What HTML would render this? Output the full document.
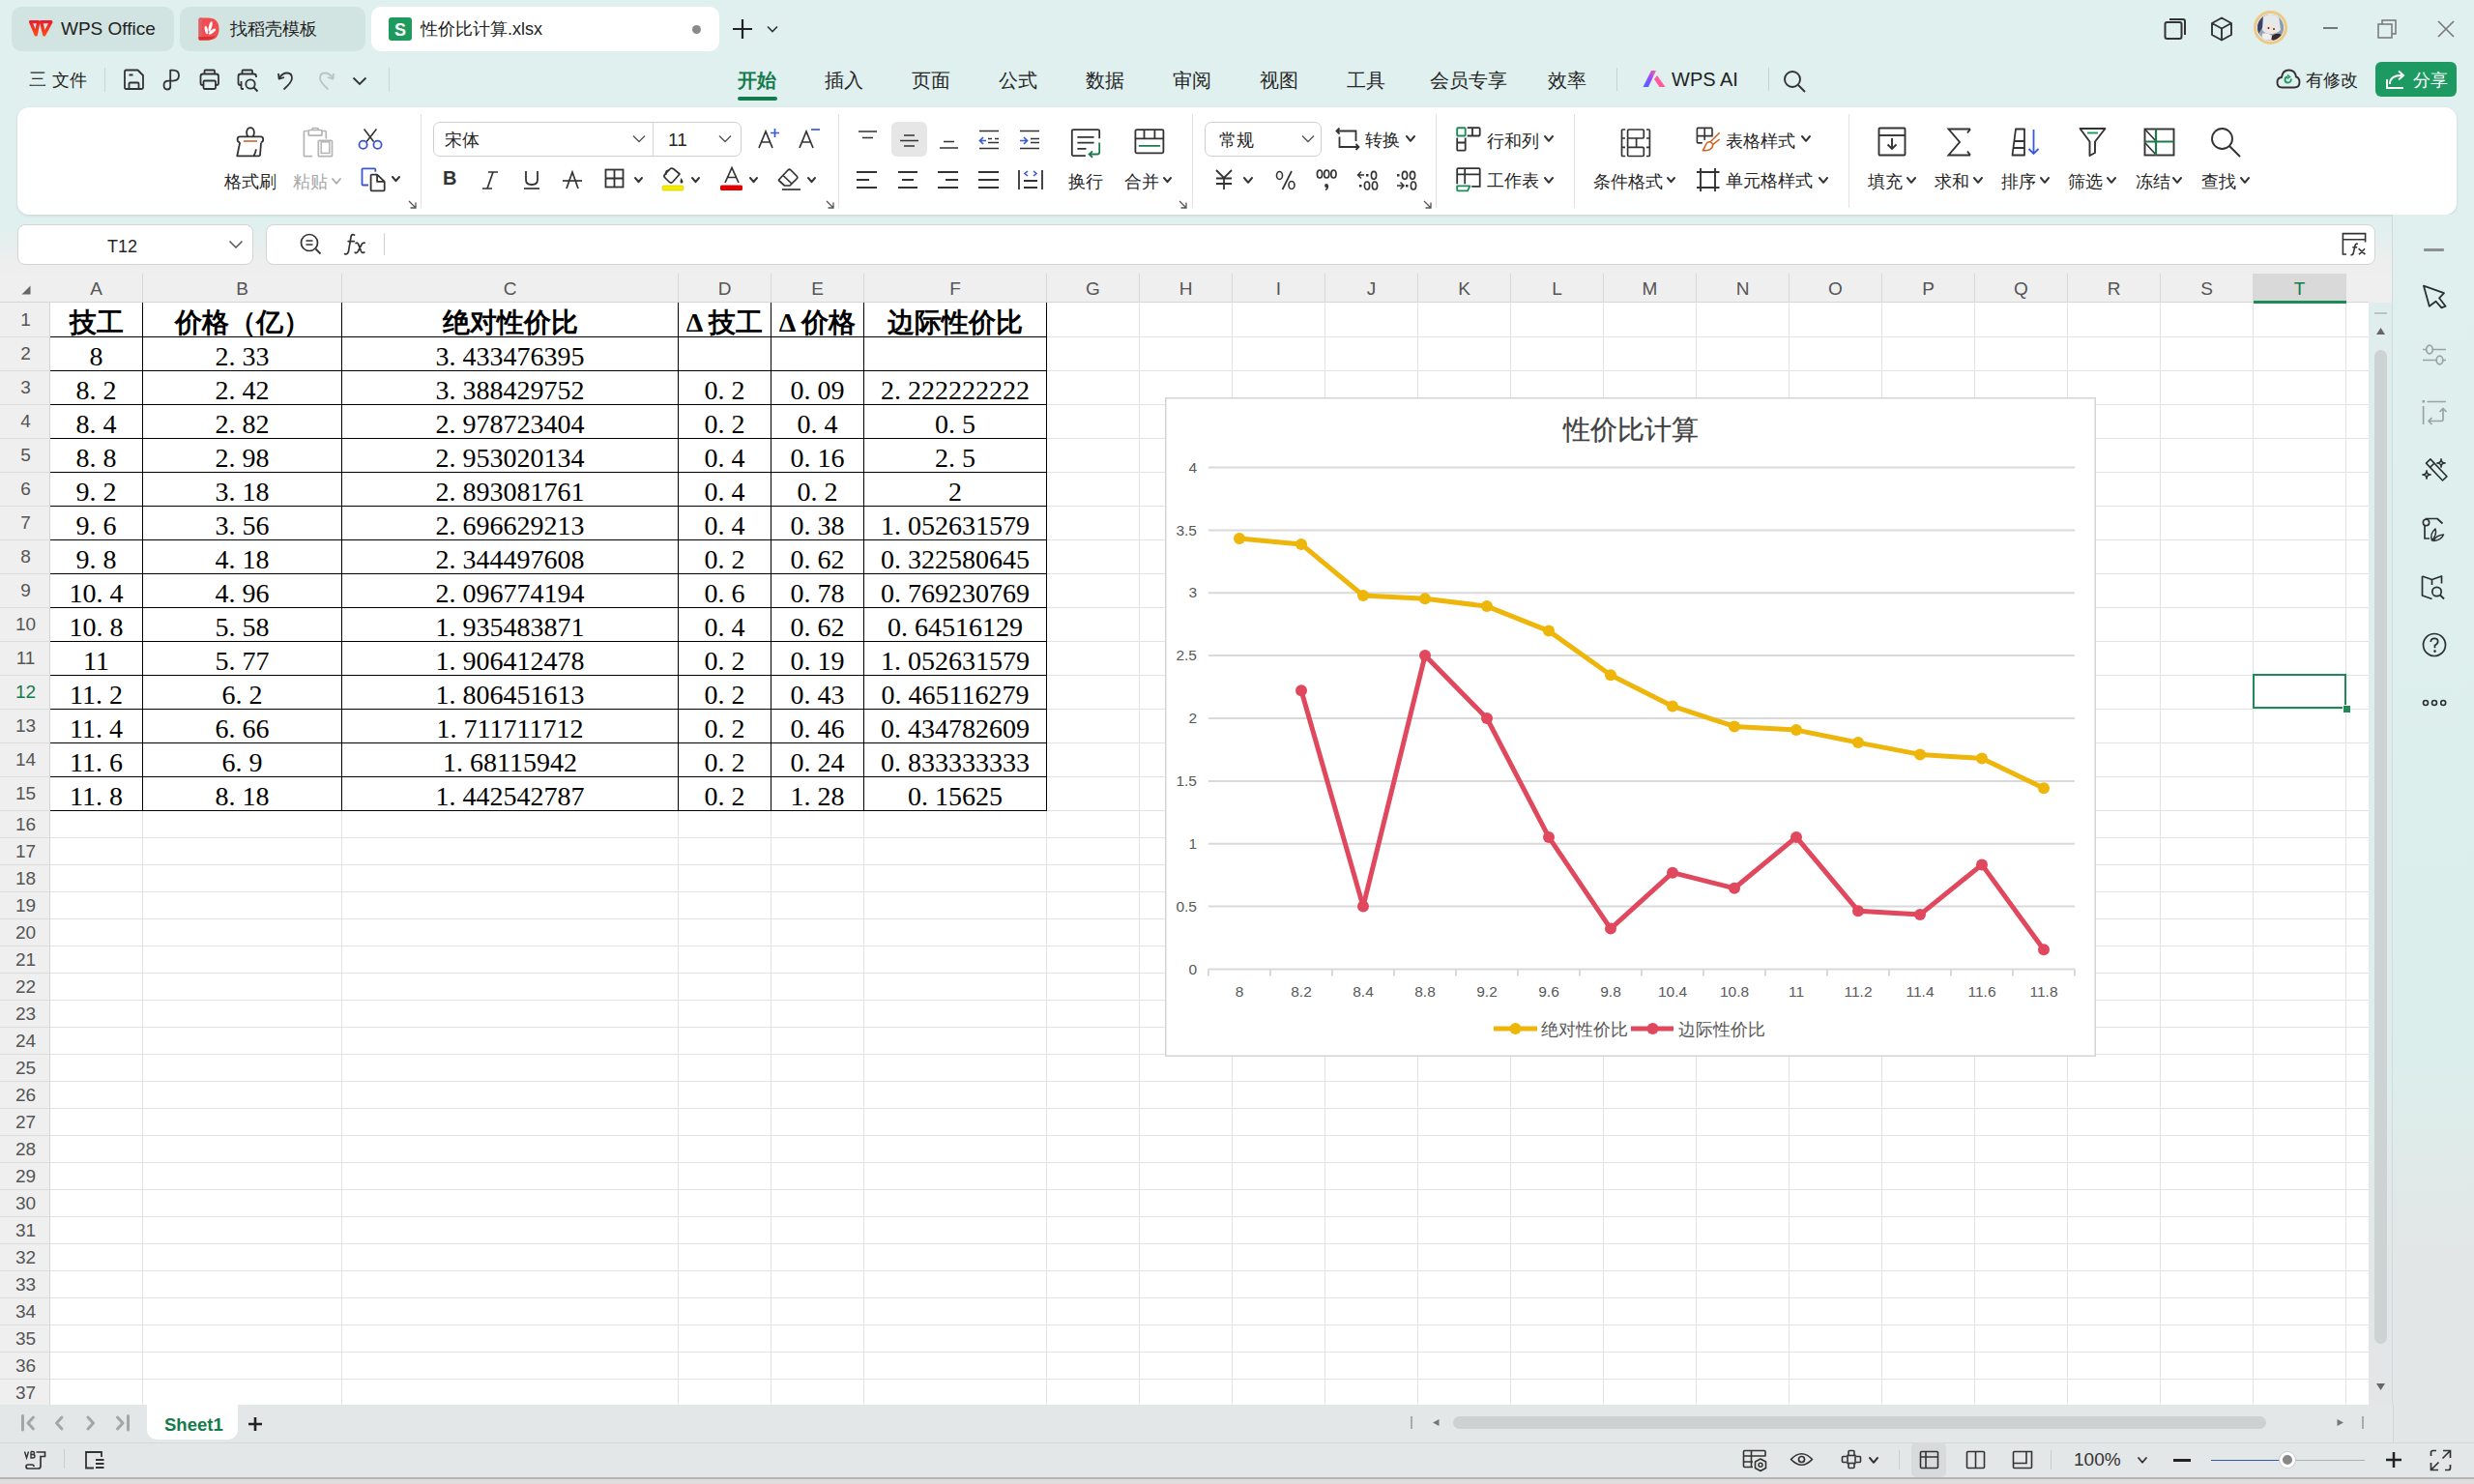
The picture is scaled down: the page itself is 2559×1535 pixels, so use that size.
<!DOCTYPE html><html><head><meta charset="utf-8"><title>WPS</title><style>
html,body{margin:0;padding:0;}
body{width:2559px;height:1535px;overflow:hidden;position:relative;font-family:'Liberation Sans',sans-serif;}
.t{position:absolute;white-space:nowrap;}
.r{position:absolute;}
.s{position:absolute;overflow:visible;}
.dt{display:inline-block;width:14px;text-align:left;}
</style></head><body><div class="r" style="left:0px;top:0px;width:2559px;height:1535px;background:#dff0ee;"></div>
<div class="r" style="left:0px;top:222px;width:2475px;height:62px;background:linear-gradient(#dff0ee 0px,#dff0ee 12px,#eeeeee 50px);"></div>
<div class="r" style="left:12px;top:7px;width:168px;height:46px;background:#d1e4e1;border-radius:10px"></div>
<div class="r" style="left:186px;top:7px;width:192px;height:46px;background:#d1e4e1;border-radius:10px"></div>
<div class="r" style="left:384px;top:7px;width:360px;height:46px;background:#ffffff;border-radius:10px"></div>
<svg class="s" style="left:28px;top:19px;" width="28" height="20" viewBox="0 0 28 20" fill="none"><defs><linearGradient id="wg" x1="0" y1="0" x2="0" y2="1"><stop offset="0" stop-color="#e8202e"/><stop offset="1" stop-color="#ff4a14"/></linearGradient></defs><path d="M3.6 3.6 H11.8 L9.2 16.8 Z M14.6 3.6 H24.8 L17.8 16.8 Z" stroke="url(#wg)" stroke-width="3.4" stroke-linejoin="round"/></svg>
<div class="t" style="left:63px;top:20px;font-size:19px;line-height:20px;color:#222;font-weight:normal;font-family:'Liberation Sans', sans-serif;">WPS Office</div>
<svg class="s" style="left:205px;top:18px;" width="23" height="25" viewBox="0 0 23 25" fill="none"><path d="M2 0.5 H10 Q21.5 0.5 21.5 12 Q21.5 23.5 10 23.5 H2 Q0.5 23.5 0.5 22 V2 Q0.5 0.5 2 0.5 Z" fill="#f14c52"/><path d="M0.5 2 Q0.5 0.5 2 0.5 H4 V23.5 H2 Q0.5 23.5 0.5 22 Z" fill="#e0606a"/><path d="M0.5 20 H12 Q16 20 18 18.5 Q15 23.5 10 23.5 H2 Q0.5 23.5 0.5 22 Z" fill="#d9302f"/><ellipse cx="8.4" cy="13" rx="1.5" ry="4.4" transform="rotate(-12 8.4 13)" fill="#fff"/><ellipse cx="12.6" cy="9.4" rx="1.6" ry="5.2" transform="rotate(14 12.6 9.4)" fill="#fff"/><ellipse cx="14.5" cy="14.6" rx="1.6" ry="4.5" transform="rotate(52 14.5 14.6)" fill="#fff"/></svg>
<div class="t" style="left:238px;top:21px;font-size:18px;line-height:18px;color:#222;font-weight:normal;font-family:'Liberation Sans', sans-serif;">找稻壳模板</div>
<svg class="s" style="left:402px;top:18px;" width="24" height="24" viewBox="0 0 24 24" fill="none"><rect x="0" y="0" width="24" height="24" rx="3" fill="#1e9a5d"/><text x="12" y="18.5" font-family="Liberation Sans" font-size="18" font-weight="bold" fill="#fff" text-anchor="middle">S</text></svg>
<div class="t" style="left:435px;top:21px;font-size:18px;line-height:18px;color:#222;font-weight:normal;font-family:'Liberation Sans', sans-serif;">性价比计算.xlsx</div>
<div class="r" style="left:716px;top:26px;width:9px;height:9px;border-radius:50%;background:#8a8a8a"></div>
<svg class="s" style="left:757px;top:19px;" width="22" height="22" viewBox="0 0 22 22" fill="none"><path d="M11 1 V21 M1 11 H21" stroke="#222" stroke-width="2.2"/></svg>
<svg class="s" style="left:793px;top:26px;" width="12" height="8" viewBox="0 0 12 8" fill="none"><path d="M1 1.5 L6 6.5 L11 1.5" stroke="#333" stroke-width="1.6"/></svg>
<svg class="s" style="left:2238px;top:18px;" width="24" height="24" viewBox="0 0 24 24" fill="none"><rect x="1.5" y="5" width="17" height="17" rx="2" stroke="#333" stroke-width="2"/><path d="M6 2 H20 Q22 2 22 4 V18" stroke="#333" stroke-width="2"/></svg>
<svg class="s" style="left:2286px;top:17px;" width="24" height="26" viewBox="0 0 24 26" fill="none"><path d="M12 1.5 L22 7 V19 L12 24.5 L2 19 V7 Z M2 7 L12 12.5 L22 7 M12 12.5 V24.5" stroke="#333" stroke-width="1.9" stroke-linejoin="round"/></svg>
<svg class="s" style="left:2331px;top:11px;" width="35" height="35" viewBox="0 0 35 35" fill="none"><defs><clipPath id="av"><circle cx="17.5" cy="17.5" r="13.5"/></clipPath></defs><circle cx="17.5" cy="17.5" r="16" stroke="#f0c886" stroke-width="3"/><g clip-path="url(#av)"><rect x="0" y="0" width="35" height="35" fill="#9aa3b8"/><path d="M2 4 L14 4 L10 16 L4 26 L2 26 Z" fill="#3c4266"/><path d="M24 6 L34 6 L34 26 L27 28 Z" fill="#8f9cae"/><path d="M10 4 Q18 2 26 6 L28 20 Q24 24 18 24 Q12 24 9 20 Z" fill="#e6e8ea"/><ellipse cx="18" cy="19" rx="5.5" ry="5" fill="#f2e4d8"/><circle cx="15.5" cy="18" r="1" fill="#4a3030"/><circle cx="21" cy="19" r="1" fill="#4a3030"/><path d="M9 24 Q14 22 19 26 L18 34 L8 34 Z" fill="#efeff0"/><path d="M19 26 Q24 22 29 25 L28 34 L18 34 Z" fill="#3a2a2a"/><path d="M13 30 L20 30 L19 34 L12 34 Z" fill="#e8b8b8"/></g></svg>
<div class="r" style="left:2403px;top:28px;width:15px;height:1.6px;background:#777;"></div>
<svg class="s" style="left:2459px;top:20px;" width="21" height="20" viewBox="0 0 21 20" fill="none"><rect x="1" y="5" width="14" height="14" stroke="#777" stroke-width="1.5"/><path d="M5 5 V1 H19 V15 H15" stroke="#777" stroke-width="1.5"/></svg>
<svg class="s" style="left:2521px;top:21px;" width="18" height="18" viewBox="0 0 18 18" fill="none"><path d="M1 1 L17 17 M17 1 L1 17" stroke="#777" stroke-width="1.6"/></svg>
<div class="t" style="left:30px;top:73px;font-size:18px;line-height:18px;color:#333;font-weight:normal;font-family:'Liberation Sans', sans-serif;">三</div>
<div class="t" style="left:54px;top:74px;font-size:18px;line-height:18px;color:#222;font-weight:normal;font-family:'Liberation Sans', sans-serif;">文件</div>
<div class="r" style="left:108px;top:70px;width:1px;height:25px;background:#c9d8d6;"></div>
<svg class="s" style="left:127px;top:71px;" width="24" height="23" viewBox="0 0 24 23" fill="none"><path d="M2 3 Q2 1.5 3.5 1.5 H15.5 L21 7 V19.5 Q21 21 19.5 21 H3.5 Q2 21 2 19.5 Z" stroke="#333" stroke-width="1.8" stroke-linejoin="round"/><path d="M6.5 21 V15.5 Q6.5 14.5 7.5 14.5 H15.5 Q16.5 14.5 16.5 15.5 V21 M6.5 6.5 H10.5" stroke="#333" stroke-width="1.8"/></svg>
<svg class="s" style="left:168px;top:71px;" width="20" height="24" viewBox="0 0 20 24" fill="none"><path d="M8.2 20 V1.6 H11 Q17 1.6 17 7.1 Q17 12.6 11 12.6 H6 Q1.5 12.6 1.5 17 Q1.5 21.5 5 21.5 Q8.2 21.5 8.2 18.5" stroke="#333" stroke-width="1.8" stroke-linejoin="round"/></svg>
<svg class="s" style="left:206px;top:71px;" width="22" height="23" viewBox="0 0 22 23" fill="none"><path d="M5.5 5.5 V2.5 Q5.5 1.5 6.5 1.5 H15 Q16 1.5 16 2.5 V5.5" stroke="#333" stroke-width="1.8"/><path d="M4.5 17 H3.5 Q1.5 17 1.5 15 V8 Q1.5 5.5 4 5.5 H17.5 Q20 5.5 20 8 V15 Q20 17 18 17 H17" stroke="#333" stroke-width="1.8"/><rect x="4.5" y="12.5" width="12.5" height="8.5" rx="1.2" stroke="#333" stroke-width="1.8"/></svg>
<svg class="s" style="left:245px;top:71px;" width="24" height="25" viewBox="0 0 24 25" fill="none"><path d="M5.5 5.5 V2.5 Q5.5 1.5 6.5 1.5 H15 Q16 1.5 16 2.5 V5.5" stroke="#333" stroke-width="1.8"/><path d="M4.5 17 H3.5 Q1.5 17 1.5 15 V8 Q1.5 5.5 4 5.5 H17.5 Q20 5.5 20 8 V9" stroke="#333" stroke-width="1.8"/><path d="M4.5 13 V20 Q4.5 21 5.5 21 H7" stroke="#333" stroke-width="1.8"/><circle cx="14" cy="16" r="4.7" stroke="#333" stroke-width="1.8"/><path d="M17.5 19.5 L21.5 23.5" stroke="#333" stroke-width="1.9"/></svg>
<svg class="s" style="left:286px;top:72px;" width="20" height="22" viewBox="0 0 20 22" fill="none"><path d="M2 4 L2.6 9.6 L8 8" stroke="#333" stroke-width="1.8" stroke-linejoin="round"/><path d="M2.8 9 Q6 3.5 11 3.5 Q16 3.5 16 9 Q16 13 7.5 20.5" stroke="#333" stroke-width="1.8"/></svg>
<svg class="s" style="left:327px;top:72px;" width="20" height="22" viewBox="0 0 20 22" fill="none"><path d="M18 4 L17.4 9.6 L12 8" stroke="#b9c4c2" stroke-width="1.8" stroke-linejoin="round"/><path d="M17.2 9 Q14 3.5 9 3.5 Q4 3.5 4 9 Q4 13 12.5 20.5" stroke="#b9c4c2" stroke-width="1.8"/></svg>
<svg class="s" style="left:364px;top:79px;" width="16" height="10" viewBox="0 0 16 10" fill="none"><path d="M1.5 1.5 L8 8 L14.5 1.5" stroke="#333" stroke-width="1.8"/></svg>
<div class="r" style="left:402px;top:70px;width:1px;height:25px;background:#c9d8d6;"></div>
<div class="t" style="left:763px;top:73px;font-size:20px;line-height:20px;color:#147a4c;font-weight:bold;font-family:'Liberation Sans', sans-serif;">开始</div>
<div class="r" style="left:763px;top:100px;width:41px;height:3.5px;background:#147a4c;border-radius:2px"></div>
<div class="t" style="left:853px;top:73px;font-size:20px;line-height:20px;color:#262626;font-weight:normal;font-family:'Liberation Sans', sans-serif;">插入</div>
<div class="t" style="left:943px;top:73px;font-size:20px;line-height:20px;color:#262626;font-weight:normal;font-family:'Liberation Sans', sans-serif;">页面</div>
<div class="t" style="left:1033px;top:73px;font-size:20px;line-height:20px;color:#262626;font-weight:normal;font-family:'Liberation Sans', sans-serif;">公式</div>
<div class="t" style="left:1123px;top:73px;font-size:20px;line-height:20px;color:#262626;font-weight:normal;font-family:'Liberation Sans', sans-serif;">数据</div>
<div class="t" style="left:1213px;top:73px;font-size:20px;line-height:20px;color:#262626;font-weight:normal;font-family:'Liberation Sans', sans-serif;">审阅</div>
<div class="t" style="left:1303px;top:73px;font-size:20px;line-height:20px;color:#262626;font-weight:normal;font-family:'Liberation Sans', sans-serif;">视图</div>
<div class="t" style="left:1393px;top:73px;font-size:20px;line-height:20px;color:#262626;font-weight:normal;font-family:'Liberation Sans', sans-serif;">工具</div>
<div class="t" style="left:1479px;top:73px;font-size:20px;line-height:20px;color:#262626;font-weight:normal;font-family:'Liberation Sans', sans-serif;">会员专享</div>
<div class="t" style="left:1601px;top:73px;font-size:20px;line-height:20px;color:#262626;font-weight:normal;font-family:'Liberation Sans', sans-serif;">效率</div>
<div class="r" style="left:1672px;top:70px;width:1px;height:24px;background:#c5d3d1;"></div>
<svg class="s" style="left:1699px;top:72px;" width="24" height="19" viewBox="0 0 24 19" fill="none"><defs><linearGradient id="ai" x1="0" y1="1" x2="1" y2="0"><stop offset="0" stop-color="#3f6cff"/><stop offset="0.5" stop-color="#8b4dff"/><stop offset="1" stop-color="#ff5fa0"/></linearGradient></defs><path d="M0.5 18 L9 1 H14 L6 18 Z" fill="url(#ai)"/><path d="M12 10 L15 6 L23.5 18 H17.5 Z" fill="#ff5b9c"/></svg>
<div class="t" style="left:1729px;top:72px;font-size:20px;line-height:20px;color:#222;font-weight:normal;font-family:'Liberation Sans', sans-serif;">WPS AI</div>
<div class="r" style="left:1829px;top:70px;width:1px;height:24px;background:#c5d3d1;"></div>
<svg class="s" style="left:1844px;top:72px;" width="25" height="24" viewBox="0 0 25 24" fill="none"><circle cx="10" cy="10" r="8" stroke="#333" stroke-width="1.9"/><path d="M16 16 L23 23" stroke="#333" stroke-width="2"/></svg>
<svg class="s" style="left:2354px;top:70px;" width="26" height="22" viewBox="0 0 26 22" fill="none"><path d="M6.5 20.5 Q1.5 20.5 1.5 15 Q1.5 10.5 6 10 Q7 2.5 13.5 2.5 Q20 2.5 21 9.5 Q24.5 10.5 24.5 15 Q24.5 20.5 19 20.5 Z" stroke="#333" stroke-width="1.9" stroke-linejoin="round"/><path d="M16 11.5 Q15.5 15.5 12.5 15.5 Q9.5 15.5 9.5 12.5 Q9.5 9.5 12.5 9.5" stroke="#1e9a5d" stroke-width="1.9"/><path d="M12 7.5 L14.5 9.5 L12 11.5" stroke="#1e9a5d" stroke-width="1.6"/></svg>
<div class="t" style="left:2385px;top:74px;font-size:18px;line-height:18px;color:#262626;font-weight:normal;font-family:'Liberation Sans', sans-serif;">有修改</div>
<div class="r" style="left:2457px;top:64px;width:84px;height:36px;background:#1d9a61;border-radius:6px"></div>
<svg class="s" style="left:2467px;top:71px;" width="22" height="22" viewBox="0 0 22 22" fill="none"><path d="M2 11 V20 H19" stroke="#fff" stroke-width="1.9"/><path d="M5 16 Q5 7 17 7" stroke="#fff" stroke-width="1.9"/><path d="M14 2.5 L19 7 L14 11.5" stroke="#fff" stroke-width="1.9"/></svg>
<div class="t" style="left:2496px;top:74px;font-size:18px;line-height:18px;color:#ffffff;font-weight:normal;font-family:'Liberation Sans', sans-serif;">分享</div>
<div class="r" style="left:18px;top:111px;width:2523px;height:111px;background:#ffffff;border-radius:12px;box-shadow:0 1px 3px rgba(0,0,0,0.12)"></div>
<svg class="s" style="left:243px;top:131px;" width="32" height="32" viewBox="0 0 32 32" fill="none"><path d="M13.6 10.3 Q11.8 8.5 12.2 5.2 Q12.8 1.2 16 1.2 Q19.2 1.2 19.8 5.2 Q20.2 8.5 18.4 10.3 M5 16.1 Q2.6 16.1 2.6 13.2 Q2.6 10.3 5 10.3 H26.8 Q29.2 10.3 29.2 13.2 Q29.2 16.1 26.8 16.1 M5.2 16.1 L2.3 30.3 H24.8 Q25.6 30.3 26 29.4 L27 16.8 M21.9 23.4 Q21.5 27 19.4 30.3" stroke="#333" stroke-width="1.8" stroke-linejoin="round"/><path d="M8.8 15 H23" stroke="#c8622b" stroke-width="1.6"/></svg>
<div class="t" style="left:232px;top:179px;font-size:18px;line-height:18px;color:#262626;font-weight:normal;font-family:'Liberation Sans', sans-serif;">格式刷</div>
<svg class="s" style="left:313px;top:131px;" width="32" height="32" viewBox="0 0 32 32" fill="none"><path d="M10.2 30.7 H2.4 Q1.4 30.7 1.4 29.7 V5.5 Q1.4 4.5 2.4 4.5 H5.5 M20 4.5 H23.3 Q24.3 4.5 24.3 5.5 V12.5 M10.2 3.5 V2 Q10.2 1.5 10.7 1.5 H15.5 Q16 1.5 16 2 V3.5" stroke="#b5b5b5" stroke-width="1.7"/><rect x="6.2" y="3.5" width="13.8" height="5.7" rx="1" stroke="#b5b5b5" stroke-width="1.7"/><rect x="16.3" y="14.3" width="14.2" height="16.4" rx="1" stroke="#b5b5b5" stroke-width="1.7"/><rect x="19.2" y="15.8" width="8.6" height="11.6" stroke="#b5b5b5" stroke-width="1.5"/></svg>
<div class="t" style="left:303px;top:179px;font-size:18px;line-height:18px;color:#a8a8a8;font-weight:normal;font-family:'Liberation Sans', sans-serif;">粘贴</div>
<svg class="s" style="left:343px;top:184px;" width="10" height="6.8" viewBox="0 0 10 6.8" fill="none"><path d="M1 1 L5.0 5.8 L9 1" stroke="#aaa" stroke-width="1.8" stroke-linecap="round" stroke-linejoin="round"/></svg>
<svg class="s" style="left:370px;top:133px;" width="26" height="22" viewBox="0 0 26 22" fill="none"><path d="M6.6 0.6 L16.5 13.4 M19.4 0.6 L9.2 13.4" stroke="#333" stroke-width="1.6"/><circle cx="5.6" cy="16.7" r="4.1" stroke="#3a55d0" stroke-width="1.8"/><circle cx="20.5" cy="16.7" r="4.1" stroke="#3a55d0" stroke-width="1.8"/></svg>
<svg class="s" style="left:373px;top:173px;" width="26" height="26" viewBox="0 0 26 26" fill="none"><path d="M8 18.5 H2.5 Q1.5 18.5 1.5 17.5 V2.4 Q1.5 1.4 2.5 1.4 H14.3 Q15.3 1.4 15.3 2.4 V4.7" stroke="#3a55d0" stroke-width="1.8"/><path d="M10.6 23.3 V8.6 Q10.6 7.6 11.6 7.6 H17.1 L24.7 14.9 V23.3 Q24.7 24.3 23.7 24.3 H11.6 Q10.6 24.3 10.6 23.3 Z M17.1 7.6 V14.9 H24.7" stroke="#333" stroke-width="1.8" stroke-linejoin="round"/></svg>
<svg class="s" style="left:405px;top:182px;" width="9" height="6.2" viewBox="0 0 9 6.2" fill="none"><path d="M1 1 L4.5 5.2 L8 1" stroke="#333" stroke-width="2" stroke-linecap="round" stroke-linejoin="round"/></svg>
<svg class="s" style="left:422px;top:207px;" width="9" height="9" viewBox="0 0 9 9" fill="none"><path d="M1 1 L8 8 M8 2.5 V8 H2.5" stroke="#555" stroke-width="1.3"/></svg>
<div class="r" style="left:435px;top:118px;width:1px;height:97px;background:#e1e1e1;"></div>
<div class="r" style="left:448px;top:126px;width:317px;height:34px;border:1px solid #cfcfcf;border-radius:7px;background:#fff"></div>
<div class="r" style="left:675px;top:127px;width:1px;height:34px;background:#d6d6d6;"></div>
<div class="t" style="left:460px;top:136px;font-size:18px;line-height:18px;color:#262626;font-weight:normal;font-family:'Liberation Sans', sans-serif;">宋体</div>
<svg class="s" style="left:654px;top:139px;" width="14" height="9" viewBox="0 0 14 9" fill="none"><path d="M1 1.5 L7 7.5 L13 1.5" stroke="#555" stroke-width="1.4"/></svg>
<div class="t" style="left:691px;top:135px;font-size:19px;line-height:19px;color:#262626;font-weight:normal;font-family:'Liberation Sans', sans-serif;">11</div>
<svg class="s" style="left:743px;top:139px;" width="14" height="9" viewBox="0 0 14 9" fill="none"><path d="M1 1.5 L7 7.5 L13 1.5" stroke="#555" stroke-width="1.4"/></svg>
<svg class="s" style="left:784px;top:132px;" width="24" height="22" viewBox="0 0 24 22" fill="none"><path d="M1 21 L8 4 L15 21 M3.8 15 H12.2" stroke="#333" stroke-width="1.7"/><path d="M17.5 1 V10 M13 5.5 H22" stroke="#3a5bd9" stroke-width="1.7"/></svg>
<svg class="s" style="left:826px;top:132px;" width="24" height="22" viewBox="0 0 24 22" fill="none"><path d="M1 21 L8 4 L15 21 M3.8 15 H12.2" stroke="#333" stroke-width="1.7"/><path d="M13 2 H22" stroke="#3a5bd9" stroke-width="1.7"/></svg>
<div class="t" style="left:458px;top:174px;font-size:20px;line-height:20px;color:#333;font-weight:normal;font-family:'Liberation Sans', sans-serif;font-family:Liberation Sans"><b>B</b></div>
<svg class="s" style="left:498px;top:177px;" width="18" height="19" viewBox="0 0 18 19" fill="none"><path d="M7 1 H17 M1 18 H11 M12 1 L6 18" stroke="#333" stroke-width="1.7"/></svg>
<svg class="s" style="left:541px;top:176px;" width="18" height="20" viewBox="0 0 18 20" fill="none"><path d="M3 1 V10 Q3 15 9 15 Q15 15 15 10 V1" stroke="#333" stroke-width="1.8"/><path d="M1 19 H17" stroke="#333" stroke-width="1.7"/></svg>
<svg class="s" style="left:581px;top:176px;" width="22" height="20" viewBox="0 0 22 20" fill="none"><path d="M5 19 L11 2 L17 19" stroke="#333" stroke-width="1.7"/><path d="M1 11 H21" stroke="#333" stroke-width="1.7"/></svg>
<svg class="s" style="left:625px;top:174px;" width="22" height="22" viewBox="0 0 22 22" fill="none"><rect x="1.5" y="1.5" width="18" height="18" stroke="#333" stroke-width="1.8"/><path d="M10.5 1.5 V19.5 M1.5 10.5 H19.5" stroke="#333" stroke-width="1.8"/></svg>
<svg class="s" style="left:656px;top:183px;" width="9" height="6.2" viewBox="0 0 9 6.2" fill="none"><path d="M1 1 L4.5 5.2 L8 1" stroke="#333" stroke-width="2" stroke-linecap="round" stroke-linejoin="round"/></svg>
<svg class="s" style="left:684px;top:172px;" width="26" height="26" viewBox="0 0 26 26" fill="none"><path d="M8 4 Q10 1 13 3 L19 8 L12 16 Q10 18 8 16 L4 12 Q2 10 4 8 Z" stroke="#333" stroke-width="1.7" stroke-linejoin="round"/><path d="M8 4 Q4 4 5 9" stroke="#333" stroke-width="1.7"/><path d="M20.5 12 Q22.5 15 22.5 16 Q22.5 17.5 21 17.5 Q19.5 17.5 19.5 16 Q19.5 15 20.5 12Z" fill="#333"/><rect x="1" y="20" width="22" height="5" rx="1.5" fill="#f4ec00" stroke="#d9cf00" stroke-width="0.8"/></svg>
<svg class="s" style="left:715px;top:183px;" width="9" height="6.2" viewBox="0 0 9 6.2" fill="none"><path d="M1 1 L4.5 5.2 L8 1" stroke="#333" stroke-width="2" stroke-linecap="round" stroke-linejoin="round"/></svg>
<svg class="s" style="left:744px;top:172px;" width="26" height="26" viewBox="0 0 26 26" fill="none"><path d="M6 17 L13 1.5 L20 17 M8.5 11.5 H17.5" stroke="#333" stroke-width="1.7"/><rect x="1" y="19.5" width="23" height="5.5" rx="1.5" fill="#e00000"/></svg>
<svg class="s" style="left:775px;top:183px;" width="9" height="6.2" viewBox="0 0 9 6.2" fill="none"><path d="M1 1 L4.5 5.2 L8 1" stroke="#333" stroke-width="2" stroke-linecap="round" stroke-linejoin="round"/></svg>
<svg class="s" style="left:803px;top:173px;" width="28" height="24" viewBox="0 0 28 24" fill="none"><path d="M2.5 13 L12 3 Q13.5 1.5 15 3 L21 9 Q22.5 10.5 21 12 L14 19 H8.5 L2.5 13.5 Z" stroke="#333" stroke-width="1.7" stroke-linejoin="round"/><path d="M7 8.5 L16 17" stroke="#333" stroke-width="1.7"/><path d="M6 23 H25" stroke="#333" stroke-width="1.7"/></svg>
<svg class="s" style="left:835px;top:183px;" width="9" height="6.2" viewBox="0 0 9 6.2" fill="none"><path d="M1 1 L4.5 5.2 L8 1" stroke="#333" stroke-width="2" stroke-linecap="round" stroke-linejoin="round"/></svg>
<svg class="s" style="left:854px;top:207px;" width="9" height="9" viewBox="0 0 9 9" fill="none"><path d="M1 1 L8 8 M8 2.5 V8 H2.5" stroke="#555" stroke-width="1.3"/></svg>
<div class="r" style="left:867px;top:118px;width:1px;height:97px;background:#e1e1e1;"></div>
<svg class="s" style="left:888px;top:135px;" width="20" height="10" viewBox="0 0 20 10" fill="none"><path d="M0 1 H19 M4 7.5 H15" stroke="#333" stroke-width="1.6"/></svg>
<div class="r" style="left:922px;top:126px;width:37px;height:36px;background:#e6e6e6;border-radius:6px"></div>
<svg class="s" style="left:931px;top:139px;" width="20" height="14" viewBox="0 0 20 14" fill="none"><path d="M4 1 H15 M0 6.5 H19 M4 12 H15" stroke="#333" stroke-width="1.6"/></svg>
<svg class="s" style="left:972px;top:145px;" width="20" height="10" viewBox="0 0 20 10" fill="none"><path d="M4 1.5 H15 M0 8 H19" stroke="#333" stroke-width="1.6"/></svg>
<svg class="s" style="left:1012px;top:134px;" width="22" height="22" viewBox="0 0 22 22" fill="none"><path d="M1 1.5 H21 M10 9.5 H14 M17 9.5 H21 M10 13.5 H21 M1 19.5 H21" stroke="#333" stroke-width="1.7"/><path d="M8 11.5 H1.5 M5 8 L1.5 11.5 L5 15" stroke="#3a5bd9" stroke-width="1.7"/></svg>
<svg class="s" style="left:1054px;top:134px;" width="22" height="22" viewBox="0 0 22 22" fill="none"><path d="M1 1.5 H21 M12 9.5 H21 M12 13.5 H21 M1 19.5 H21" stroke="#333" stroke-width="1.7"/><path d="M1 11.5 H8.5 M5 8 L8.5 11.5 L5 15" stroke="#3a5bd9" stroke-width="1.7"/></svg>
<svg class="s" style="left:886px;top:177px;" width="22" height="19" viewBox="0 0 22 19" fill="none"><path d="M0 1 H21 M0 9 H13 M0 17 H21" stroke="#333" stroke-width="1.8"/></svg>
<svg class="s" style="left:928px;top:177px;" width="22" height="19" viewBox="0 0 22 19" fill="none"><path d="M1 1 H21 M5 9 H17 M1 17 H21" stroke="#333" stroke-width="1.8"/></svg>
<svg class="s" style="left:970px;top:177px;" width="22" height="19" viewBox="0 0 22 19" fill="none"><path d="M0 1 H21 M8 9 H21 M0 17 H21" stroke="#333" stroke-width="1.8"/></svg>
<svg class="s" style="left:1012px;top:177px;" width="22" height="19" viewBox="0 0 22 19" fill="none"><path d="M0 1 H21 M0 9 H21 M0 17 H21" stroke="#333" stroke-width="1.8"/></svg>
<svg class="s" style="left:1053px;top:175px;" width="26" height="22" viewBox="0 0 26 22" fill="none"><path d="M1 1 V21 M25 1 V21 M6 12 H20 M6 19 H20" stroke="#333" stroke-width="1.8"/><path d="M10 2 L7 4.5 L10 7 M16 2 L19 4.5 L16 7" stroke="#3a5bd9" stroke-width="1.6"/></svg>
<svg class="s" style="left:1107px;top:133px;" width="33" height="32" viewBox="0 0 33 32" fill="none"><path d="M15.8 28.1 H3.3 Q1.8 28.1 1.8 26.6 V2.6 Q1.8 1.1 3.3 1.1 H28.7 Q30.2 1.1 30.2 2.6 V10.2 M7.4 8.8 H24.6 M7.4 14.6 H24.6 M7.4 20.9 H16.5" stroke="#333" stroke-width="1.8"/><path d="M30.2 14.4 V24.5 Q30.2 26.5 28.2 26.5 H19.8 M23 23.3 L19.6 26.5 L23 29.9" stroke="#1e7a4d" stroke-width="1.8"/></svg>
<div class="t" style="left:1105px;top:179px;font-size:18px;line-height:18px;color:#262626;font-weight:normal;font-family:'Liberation Sans', sans-serif;">换行</div>
<svg class="s" style="left:1173px;top:133px;" width="32" height="27" viewBox="0 0 32 27" fill="none"><rect x="1.4" y="1.1" width="29" height="24.2" rx="1.5" stroke="#333" stroke-width="1.8"/><path d="M1.4 10.4 H30.4 M10.5 1.1 V10.4 M21.4 1.1 V10.4" stroke="#333" stroke-width="1.8"/><path d="M5.6 17.9 H26.3" stroke="#1e7a4d" stroke-width="1.9" stroke-linecap="round"/></svg>
<div class="t" style="left:1163px;top:179px;font-size:18px;line-height:18px;color:#262626;font-weight:normal;font-family:'Liberation Sans', sans-serif;">合并</div>
<svg class="s" style="left:1203px;top:183px;" width="9" height="6.2" viewBox="0 0 9 6.2" fill="none"><path d="M1 1 L4.5 5.2 L8 1" stroke="#333" stroke-width="2" stroke-linecap="round" stroke-linejoin="round"/></svg>
<svg class="s" style="left:1219px;top:207px;" width="9" height="9" viewBox="0 0 9 9" fill="none"><path d="M1 1 L8 8 M8 2.5 V8 H2.5" stroke="#555" stroke-width="1.3"/></svg>
<div class="r" style="left:1233px;top:118px;width:1px;height:97px;background:#e1e1e1;"></div>
<div class="r" style="left:1246px;top:126px;width:119px;height:34px;border:1px solid #cfcfcf;border-radius:7px;background:#fff"></div>
<div class="t" style="left:1261px;top:136px;font-size:18px;line-height:18px;color:#262626;font-weight:normal;font-family:'Liberation Sans', sans-serif;">常规</div>
<svg class="s" style="left:1346px;top:139px;" width="14" height="9" viewBox="0 0 14 9" fill="none"><path d="M1 1.5 L7 7.5 L13 1.5" stroke="#555" stroke-width="1.4"/></svg>
<svg class="s" style="left:1381px;top:131px;" width="26" height="26" viewBox="0 0 26 26" fill="none"><path d="M4.5 1.5 L1.5 4.5 L4.5 7.5 M1.5 4.5 H21.5 V15" stroke="#333" stroke-width="1.8"/><path d="M21.5 24 L24.5 21 L21.5 18 M24.5 21 H4.5 V10.5" stroke="#333" stroke-width="1.8"/></svg>
<div class="t" style="left:1412px;top:136px;font-size:18px;line-height:18px;color:#262626;font-weight:normal;font-family:'Liberation Sans', sans-serif;">转换</div>
<svg class="s" style="left:1454px;top:140px;" width="10" height="6.8" viewBox="0 0 10 6.8" fill="none"><path d="M1 1 L5.0 5.8 L9 1" stroke="#333" stroke-width="2" stroke-linecap="round" stroke-linejoin="round"/></svg>
<div class="t" style="left:1256px;top:175px;font-size:22px;line-height:22px;color:#333;font-weight:normal;font-family:'Liberation Sans', sans-serif;">¥</div>
<svg class="s" style="left:1256px;top:175px;background:#fff" width="20" height="22" viewBox="0 0 20 22" fill="none"><path d="M2 1 L10 9 L18 1 M2 9.5 H18 M2 15 H18 M10 9 V21" stroke="#333" stroke-width="1.8"/></svg>
<svg class="s" style="left:1286px;top:183px;" width="10" height="6.8" viewBox="0 0 10 6.8" fill="none"><path d="M1 1 L5.0 5.8 L9 1" stroke="#333" stroke-width="2" stroke-linecap="round" stroke-linejoin="round"/></svg>
<svg class="s" style="left:1319px;top:176px;" width="22" height="21" viewBox="0 0 22 21" fill="none"><path d="M17 1 L7.5 20" stroke="#333" stroke-width="1.7"/><ellipse cx="4.5" cy="5.5" rx="3" ry="4" stroke="#333" stroke-width="1.6"/><ellipse cx="17" cy="15.5" rx="3" ry="4" stroke="#333" stroke-width="1.6"/></svg>
<svg class="s" style="left:1360px;top:174px;" width="24" height="24" viewBox="0 0 24 24" fill="none"><ellipse cx="5" cy="6" rx="2.6" ry="4" stroke="#333" stroke-width="1.7"/><ellipse cx="12.2" cy="6" rx="2.6" ry="4" stroke="#333" stroke-width="1.7"/><ellipse cx="19.4" cy="6" rx="2.6" ry="4" stroke="#333" stroke-width="1.7"/><circle cx="12" cy="18" r="1.9" fill="#333"/><path d="M13.5 18 Q13.6 20.8 11.2 22.6" stroke="#333" stroke-width="1.6"/></svg>
<svg class="s" style="left:1403px;top:176px;" width="24" height="22" viewBox="0 0 24 22" fill="none"><path d="M5 1.5 L1.5 5 L5 8.5 M1.5 5 H8" stroke="#333" stroke-width="1.5"/><rect x="10" y="4" width="2.5" height="2.5" fill="#333"/><ellipse cx="18" cy="5.3" rx="2.6" ry="4" stroke="#333" stroke-width="1.7"/><rect x="3" y="15" width="2.5" height="2.5" fill="#333"/><ellipse cx="11" cy="16" rx="2.6" ry="4" stroke="#333" stroke-width="1.7"/><ellipse cx="19" cy="16" rx="2.6" ry="4" stroke="#333" stroke-width="1.7"/></svg>
<svg class="s" style="left:1444px;top:176px;" width="24" height="22" viewBox="0 0 24 22" fill="none"><rect x="1" y="4" width="2.5" height="2.5" fill="#333"/><ellipse cx="9" cy="5.3" rx="2.6" ry="4" stroke="#333" stroke-width="1.7"/><ellipse cx="17" cy="5.3" rx="2.6" ry="4" stroke="#333" stroke-width="1.7"/><path d="M1 16 H7.5 M4.5 12.5 L8 16 L4.5 19.5" stroke="#333" stroke-width="1.5"/><rect x="10" y="15" width="2.5" height="2.5" fill="#333"/><ellipse cx="18" cy="16" rx="2.6" ry="4" stroke="#333" stroke-width="1.7"/></svg>
<svg class="s" style="left:1472px;top:207px;" width="9" height="9" viewBox="0 0 9 9" fill="none"><path d="M1 1 L8 8 M8 2.5 V8 H2.5" stroke="#555" stroke-width="1.3"/></svg>
<div class="r" style="left:1485px;top:118px;width:1px;height:97px;background:#e1e1e1;"></div>
<svg class="s" style="left:1506px;top:131px;" width="27" height="27" viewBox="0 0 27 27" fill="none"><rect x="1.2" y="1.2" width="8.5" height="8.3" rx="1" stroke="#1e8a57" stroke-width="1.9"/><path d="M11.7 1.2 H23.7 Q24.7 1.2 24.7 2.2 V8.5 Q24.7 9.5 23.7 9.5 H11.7 M17 1.2 V9.5 M1.2 11.5 V23.7 Q1.2 24.7 2.2 24.7 H8.7 Q9.7 24.7 9.7 23.7 V11.5 M1.2 16.5 H9.7" stroke="#333" stroke-width="1.8"/></svg>
<div class="t" style="left:1538px;top:137px;font-size:18px;line-height:18px;color:#262626;font-weight:normal;font-family:'Liberation Sans', sans-serif;">行和列</div>
<svg class="s" style="left:1597px;top:140px;" width="10" height="6.8" viewBox="0 0 10 6.8" fill="none"><path d="M1 1 L5.0 5.8 L9 1" stroke="#333" stroke-width="2" stroke-linecap="round" stroke-linejoin="round"/></svg>
<svg class="s" style="left:1506px;top:173px;" width="27" height="27" viewBox="0 0 27 27" fill="none"><path d="M1.2 17.3 V2.1 Q1.2 1.1 2.2 1.1 H23.7 Q24.7 1.1 24.7 2.1 V19.8 H16.2 M1.2 7.4 H24.7 M9.2 1.1 V17.3" stroke="#333" stroke-width="1.8"/><path d="M1.2 19.3 H14.4 L12 24.3 H2.2 Q1.2 24.3 1.2 23.3 Z" stroke="#1e8a57" stroke-width="1.8" stroke-linejoin="round"/></svg>
<div class="t" style="left:1538px;top:178px;font-size:18px;line-height:18px;color:#262626;font-weight:normal;font-family:'Liberation Sans', sans-serif;">工作表</div>
<svg class="s" style="left:1597px;top:183px;" width="10" height="6.8" viewBox="0 0 10 6.8" fill="none"><path d="M1 1 L5.0 5.8 L9 1" stroke="#333" stroke-width="2" stroke-linecap="round" stroke-linejoin="round"/></svg>
<div class="r" style="left:1628px;top:118px;width:1px;height:97px;background:#e1e1e1;"></div>
<svg class="s" style="left:1676px;top:133px;" width="32" height="30" viewBox="0 0 32 30" fill="none"><path d="M5.2 1 H2.5 Q1.5 1 1.5 2 V27.5 Q1.5 28.5 2.5 28.5 H5.2 M1.5 10 H5 M1.5 19.3 H5 M27 1 H29.4 Q30.4 1 30.4 2 V27.5 Q30.4 28.5 29.4 28.5 H27 M30.4 10 H27 M30.4 19.3 H27" stroke="#333" stroke-width="1.7"/><rect x="7.6" y="1" width="16.7" height="9" rx="1.2" stroke="#333" stroke-width="1.7"/><rect x="7.6" y="19.3" width="16.7" height="9.2" rx="1.2" stroke="#333" stroke-width="1.7"/><path d="M7.6 10 V19.3 M16.6 10 V19.3" stroke="#333" stroke-width="1.7"/></svg>
<div class="t" style="left:1648px;top:179px;font-size:18px;line-height:18px;color:#262626;font-weight:normal;font-family:'Liberation Sans', sans-serif;">条件格式</div>
<svg class="s" style="left:1724px;top:183px;" width="9" height="6.2" viewBox="0 0 9 6.2" fill="none"><path d="M1 1 L4.5 5.2 L8 1" stroke="#333" stroke-width="2" stroke-linecap="round" stroke-linejoin="round"/></svg>
<svg class="s" style="left:1754px;top:131px;" width="27" height="27" viewBox="0 0 27 27" fill="none"><path d="M6.8 16.9 H2.4 Q1.4 16.9 1.4 15.9 V2.4 Q1.4 1.4 2.4 1.4 H16 Q17 1.4 17 2.4 V9.6 H1.4 M9.2 1.4 V14" stroke="#333" stroke-width="1.6"/><path d="M24.7 6.2 L15.2 15.7 M24.7 13 L17.6 18.6 M15.2 15.9 Q12 15.2 10.6 18.2 Q9.4 21.4 7.3 24.7 Q12 25.2 14.6 23.6 Q18 21.6 17.6 18.6 Q17.2 16.4 15.2 15.9 Z" stroke="#d0601f" stroke-width="1.5" stroke-linejoin="round"/></svg>
<div class="t" style="left:1785px;top:137px;font-size:18px;line-height:18px;color:#262626;font-weight:normal;font-family:'Liberation Sans', sans-serif;">表格样式</div>
<svg class="s" style="left:1863px;top:140px;" width="10" height="6.8" viewBox="0 0 10 6.8" fill="none"><path d="M1 1 L5.0 5.8 L9 1" stroke="#333" stroke-width="2" stroke-linecap="round" stroke-linejoin="round"/></svg>
<svg class="s" style="left:1754px;top:173px;" width="26" height="26" viewBox="0 0 26 26" fill="none"><path d="M5 1 V25 M20 1 V25 M1 5 H24.5 M1 21 H24.5" stroke="#333" stroke-width="1.9"/></svg>
<div class="t" style="left:1785px;top:178px;font-size:18px;line-height:18px;color:#262626;font-weight:normal;font-family:'Liberation Sans', sans-serif;">单元格样式</div>
<svg class="s" style="left:1881px;top:183px;" width="10" height="6.8" viewBox="0 0 10 6.8" fill="none"><path d="M1 1 L5.0 5.8 L9 1" stroke="#333" stroke-width="2" stroke-linecap="round" stroke-linejoin="round"/></svg>
<div class="r" style="left:1912px;top:118px;width:1px;height:97px;background:#e1e1e1;"></div>
<svg class="s" style="left:1942px;top:131px;" width="30" height="32" viewBox="0 0 30 32" fill="none"><rect x="1.5" y="1.5" width="27" height="28" rx="1" stroke="#333" stroke-width="1.9"/><path d="M1.5 9 H28.5" stroke="#333" stroke-width="1.9"/><path d="M15 12 V23 M10.5 18.5 L15 23 L19.5 18.5" stroke="#333" stroke-width="1.9"/></svg>
<div class="t" style="left:1932px;top:179px;font-size:18px;line-height:18px;color:#262626;font-weight:normal;font-family:'Liberation Sans', sans-serif;">填充</div>
<svg class="s" style="left:1972px;top:183px;" width="10" height="6.8" viewBox="0 0 10 6.8" fill="none"><path d="M1 1 L5.0 5.8 L9 1" stroke="#333" stroke-width="2" stroke-linecap="round" stroke-linejoin="round"/></svg>
<svg class="s" style="left:2013px;top:132px;" width="27" height="30" viewBox="0 0 27 30" fill="none"><path d="M25 1.5 H2.5 L14 15 L2.5 28.5 H25" stroke="#333" stroke-width="1.9" stroke-linejoin="miter"/><path d="M25 1.5 L22 5.5 M25 28.5 L22 24.5" stroke="#333" stroke-width="1.9"/></svg>
<div class="t" style="left:2001px;top:179px;font-size:18px;line-height:18px;color:#262626;font-weight:normal;font-family:'Liberation Sans', sans-serif;">求和</div>
<svg class="s" style="left:2041px;top:183px;" width="10" height="6.8" viewBox="0 0 10 6.8" fill="none"><path d="M1 1 L5.0 5.8 L9 1" stroke="#333" stroke-width="2" stroke-linecap="round" stroke-linejoin="round"/></svg>
<svg class="s" style="left:2080px;top:132px;" width="31" height="30" viewBox="0 0 31 30" fill="none"><path d="M1.5 28.5 L5 1.5 H14 V28.5 Z M3.5 14 H14 M2.3 21 H14" stroke="#333" stroke-width="1.8" stroke-linejoin="round"/><path d="M23.5 2 V27 M18.5 22 L23.5 27 L28.5 22" stroke="#3a5bd9" stroke-width="1.8"/></svg>
<div class="t" style="left:2070px;top:179px;font-size:18px;line-height:18px;color:#262626;font-weight:normal;font-family:'Liberation Sans', sans-serif;">排序</div>
<svg class="s" style="left:2110px;top:183px;" width="10" height="6.8" viewBox="0 0 10 6.8" fill="none"><path d="M1 1 L5.0 5.8 L9 1" stroke="#333" stroke-width="2" stroke-linecap="round" stroke-linejoin="round"/></svg>
<svg class="s" style="left:2150px;top:131px;" width="29" height="33" viewBox="0 0 29 33" fill="none"><path d="M1.5 2 H27.5 L17 15.5 V27 L11.5 30 V15.5 Z" stroke="#333" stroke-width="1.9" stroke-linejoin="round"/><path d="M9 6.5 H20" stroke="#1e9a5d" stroke-width="1.9"/></svg>
<div class="t" style="left:2139px;top:179px;font-size:18px;line-height:18px;color:#262626;font-weight:normal;font-family:'Liberation Sans', sans-serif;">筛选</div>
<svg class="s" style="left:2179px;top:183px;" width="10" height="6.8" viewBox="0 0 10 6.8" fill="none"><path d="M1 1 L5.0 5.8 L9 1" stroke="#333" stroke-width="2" stroke-linecap="round" stroke-linejoin="round"/></svg>
<svg class="s" style="left:2217px;top:132px;" width="33" height="30" viewBox="0 0 33 30" fill="none"><rect x="1.5" y="1.5" width="30" height="27" stroke="#333" stroke-width="1.9"/><path d="M2 2 L13 14 M2 16 L13 28" stroke="#333" stroke-width="1.6"/><path d="M13 1.5 V28.5 M1.5 14.5 H31.5" stroke="#1e7a4d" stroke-width="2.2"/></svg>
<div class="t" style="left:2209px;top:179px;font-size:18px;line-height:18px;color:#262626;font-weight:normal;font-family:'Liberation Sans', sans-serif;">冻结</div>
<svg class="s" style="left:2247px;top:183px;" width="10" height="6.8" viewBox="0 0 10 6.8" fill="none"><path d="M1 1 L5.0 5.8 L9 1" stroke="#333" stroke-width="2" stroke-linecap="round" stroke-linejoin="round"/></svg>
<svg class="s" style="left:2286px;top:131px;" width="33" height="32" viewBox="0 0 33 32" fill="none"><circle cx="12.5" cy="12.5" r="10.5" stroke="#333" stroke-width="1.9"/><path d="M20 20 L31 31" stroke="#333" stroke-width="2"/></svg>
<div class="t" style="left:2277px;top:179px;font-size:18px;line-height:18px;color:#262626;font-weight:normal;font-family:'Liberation Sans', sans-serif;">查找</div>
<svg class="s" style="left:2317px;top:183px;" width="10" height="6.8" viewBox="0 0 10 6.8" fill="none"><path d="M1 1 L5.0 5.8 L9 1" stroke="#333" stroke-width="2" stroke-linecap="round" stroke-linejoin="round"/></svg>
<div class="r" style="left:18px;top:232px;width:242px;height:40px;border:1px solid #d4d4d4;border-radius:8px;background:#fff"></div>
<div class="t" style="left:111px;top:246px;font-size:18px;line-height:19px;color:#262626;font-weight:normal;font-family:'Liberation Sans', sans-serif;">T12</div>
<svg class="s" style="left:236px;top:248px;" width="16" height="10" viewBox="0 0 16 10" fill="none"><path d="M1.5 1.5 L8 8 L14.5 1.5" stroke="#555" stroke-width="1.5"/></svg>
<div class="r" style="left:275px;top:232px;width:2180px;height:40px;border:1px solid #d4d4d4;border-radius:8px;background:#fff"></div>
<svg class="s" style="left:310px;top:241px;" width="24" height="24" viewBox="0 0 24 24" fill="none"><circle cx="10" cy="10" r="8.5" stroke="#333" stroke-width="1.7"/><path d="M6.5 8 H13.5 M6.5 12 H13.5" stroke="#333" stroke-width="1.7"/><path d="M16.5 16.5 L21.5 21.5" stroke="#333" stroke-width="1.8"/></svg>
<svg class="s" style="left:354px;top:240px;" width="27" height="26" viewBox="0 0 27 26" fill="none"><path d="M12.5 3.2 Q10.5 1.6 9.2 4 L6.4 20.6 Q5.6 23.4 2.6 22.6 M6.2 9.6 H12.4 M14 11.6 Q15.6 10.4 16.6 12.4 L19.6 20 Q20.6 22.2 22.8 21 M23.2 11.2 Q21.6 10.6 20.2 12.6 L16.2 20.2 Q14.8 22.2 13.2 21.2" stroke="#333" stroke-width="1.7" stroke-linecap="round"/></svg>
<div class="r" style="left:397px;top:241px;width:1px;height:23px;background:#d0d0d0;"></div>
<svg class="s" style="left:2420px;top:238px;" width="30" height="28" viewBox="0 0 30 28" fill="none"><path d="M3.4 12.6 V3.6 H26.6 V12.6 M3.4 9.8 H26.6 M3.4 9.8 V25 H7" stroke="#333" stroke-width="1.6"/><path d="M18.8 14.6 Q17.2 13.4 16.1 15.6 L14.1 24.4 Q13.3 26.2 11.5 25.4 M13.3 17.8 H18.2 M19.6 19.2 L26.4 25.2 M26 19.2 L20 25.2" stroke="#333" stroke-width="1.6"/></svg>
<div class="r" style="left:0px;top:283px;width:2475px;height:1170px;background:#ffffff;"></div>
<div class="r" style="left:0px;top:283px;width:2475px;height:30px;background:#efefef;"></div>
<div class="r" style="left:0px;top:283px;width:51px;height:1170px;background:#efefef;"></div>
<div class="r" style="left:2331px;top:283px;width:96px;height:30px;background:#d9d9d9;"></div>
<div class="r" style="left:147px;top:313px;width:1px;height:1140px;background:#e3e3e3;"></div>
<div class="r" style="left:353px;top:313px;width:1px;height:1140px;background:#e3e3e3;"></div>
<div class="r" style="left:701px;top:313px;width:1px;height:1140px;background:#e3e3e3;"></div>
<div class="r" style="left:797px;top:313px;width:1px;height:1140px;background:#e3e3e3;"></div>
<div class="r" style="left:893px;top:313px;width:1px;height:1140px;background:#e3e3e3;"></div>
<div class="r" style="left:1082px;top:313px;width:1px;height:1140px;background:#e3e3e3;"></div>
<div class="r" style="left:1178px;top:313px;width:1px;height:1140px;background:#e3e3e3;"></div>
<div class="r" style="left:1274px;top:313px;width:1px;height:1140px;background:#e3e3e3;"></div>
<div class="r" style="left:1370px;top:313px;width:1px;height:1140px;background:#e3e3e3;"></div>
<div class="r" style="left:1466px;top:313px;width:1px;height:1140px;background:#e3e3e3;"></div>
<div class="r" style="left:1562px;top:313px;width:1px;height:1140px;background:#e3e3e3;"></div>
<div class="r" style="left:1658px;top:313px;width:1px;height:1140px;background:#e3e3e3;"></div>
<div class="r" style="left:1754px;top:313px;width:1px;height:1140px;background:#e3e3e3;"></div>
<div class="r" style="left:1850px;top:313px;width:1px;height:1140px;background:#e3e3e3;"></div>
<div class="r" style="left:1946px;top:313px;width:1px;height:1140px;background:#e3e3e3;"></div>
<div class="r" style="left:2042px;top:313px;width:1px;height:1140px;background:#e3e3e3;"></div>
<div class="r" style="left:2138px;top:313px;width:1px;height:1140px;background:#e3e3e3;"></div>
<div class="r" style="left:2234px;top:313px;width:1px;height:1140px;background:#e3e3e3;"></div>
<div class="r" style="left:2330px;top:313px;width:1px;height:1140px;background:#e3e3e3;"></div>
<div class="r" style="left:2426px;top:313px;width:1px;height:1140px;background:#e3e3e3;"></div>
<div class="r" style="left:51px;top:348px;width:2399px;height:1px;background:#e3e3e3;"></div>
<div class="r" style="left:51px;top:383px;width:2399px;height:1px;background:#e3e3e3;"></div>
<div class="r" style="left:51px;top:418px;width:2399px;height:1px;background:#e3e3e3;"></div>
<div class="r" style="left:51px;top:453px;width:2399px;height:1px;background:#e3e3e3;"></div>
<div class="r" style="left:51px;top:488px;width:2399px;height:1px;background:#e3e3e3;"></div>
<div class="r" style="left:51px;top:523px;width:2399px;height:1px;background:#e3e3e3;"></div>
<div class="r" style="left:51px;top:558px;width:2399px;height:1px;background:#e3e3e3;"></div>
<div class="r" style="left:51px;top:593px;width:2399px;height:1px;background:#e3e3e3;"></div>
<div class="r" style="left:51px;top:628px;width:2399px;height:1px;background:#e3e3e3;"></div>
<div class="r" style="left:51px;top:663px;width:2399px;height:1px;background:#e3e3e3;"></div>
<div class="r" style="left:51px;top:698px;width:2399px;height:1px;background:#e3e3e3;"></div>
<div class="r" style="left:51px;top:733px;width:2399px;height:1px;background:#e3e3e3;"></div>
<div class="r" style="left:51px;top:768px;width:2399px;height:1px;background:#e3e3e3;"></div>
<div class="r" style="left:51px;top:803px;width:2399px;height:1px;background:#e3e3e3;"></div>
<div class="r" style="left:51px;top:838px;width:2399px;height:1px;background:#e3e3e3;"></div>
<div class="r" style="left:51px;top:866px;width:2399px;height:1px;background:#e3e3e3;"></div>
<div class="r" style="left:51px;top:894px;width:2399px;height:1px;background:#e3e3e3;"></div>
<div class="r" style="left:51px;top:922px;width:2399px;height:1px;background:#e3e3e3;"></div>
<div class="r" style="left:51px;top:950px;width:2399px;height:1px;background:#e3e3e3;"></div>
<div class="r" style="left:51px;top:978px;width:2399px;height:1px;background:#e3e3e3;"></div>
<div class="r" style="left:51px;top:1006px;width:2399px;height:1px;background:#e3e3e3;"></div>
<div class="r" style="left:51px;top:1034px;width:2399px;height:1px;background:#e3e3e3;"></div>
<div class="r" style="left:51px;top:1062px;width:2399px;height:1px;background:#e3e3e3;"></div>
<div class="r" style="left:51px;top:1090px;width:2399px;height:1px;background:#e3e3e3;"></div>
<div class="r" style="left:51px;top:1118px;width:2399px;height:1px;background:#e3e3e3;"></div>
<div class="r" style="left:51px;top:1146px;width:2399px;height:1px;background:#e3e3e3;"></div>
<div class="r" style="left:51px;top:1174px;width:2399px;height:1px;background:#e3e3e3;"></div>
<div class="r" style="left:51px;top:1202px;width:2399px;height:1px;background:#e3e3e3;"></div>
<div class="r" style="left:51px;top:1230px;width:2399px;height:1px;background:#e3e3e3;"></div>
<div class="r" style="left:51px;top:1258px;width:2399px;height:1px;background:#e3e3e3;"></div>
<div class="r" style="left:51px;top:1286px;width:2399px;height:1px;background:#e3e3e3;"></div>
<div class="r" style="left:51px;top:1314px;width:2399px;height:1px;background:#e3e3e3;"></div>
<div class="r" style="left:51px;top:1342px;width:2399px;height:1px;background:#e3e3e3;"></div>
<div class="r" style="left:51px;top:1370px;width:2399px;height:1px;background:#e3e3e3;"></div>
<div class="r" style="left:51px;top:1398px;width:2399px;height:1px;background:#e3e3e3;"></div>
<div class="r" style="left:51px;top:1426px;width:2399px;height:1px;background:#e3e3e3;"></div>
<div class="r" style="left:51px;top:1454px;width:2399px;height:1px;background:#e3e3e3;"></div>
<div class="r" style="left:147px;top:283px;width:1px;height:30px;background:#d8d8d8;"></div>
<div class="r" style="left:353px;top:283px;width:1px;height:30px;background:#d8d8d8;"></div>
<div class="r" style="left:701px;top:283px;width:1px;height:30px;background:#d8d8d8;"></div>
<div class="r" style="left:797px;top:283px;width:1px;height:30px;background:#d8d8d8;"></div>
<div class="r" style="left:893px;top:283px;width:1px;height:30px;background:#d8d8d8;"></div>
<div class="r" style="left:1082px;top:283px;width:1px;height:30px;background:#d8d8d8;"></div>
<div class="r" style="left:1178px;top:283px;width:1px;height:30px;background:#d8d8d8;"></div>
<div class="r" style="left:1274px;top:283px;width:1px;height:30px;background:#d8d8d8;"></div>
<div class="r" style="left:1370px;top:283px;width:1px;height:30px;background:#d8d8d8;"></div>
<div class="r" style="left:1466px;top:283px;width:1px;height:30px;background:#d8d8d8;"></div>
<div class="r" style="left:1562px;top:283px;width:1px;height:30px;background:#d8d8d8;"></div>
<div class="r" style="left:1658px;top:283px;width:1px;height:30px;background:#d8d8d8;"></div>
<div class="r" style="left:1754px;top:283px;width:1px;height:30px;background:#d8d8d8;"></div>
<div class="r" style="left:1850px;top:283px;width:1px;height:30px;background:#d8d8d8;"></div>
<div class="r" style="left:1946px;top:283px;width:1px;height:30px;background:#d8d8d8;"></div>
<div class="r" style="left:2042px;top:283px;width:1px;height:30px;background:#d8d8d8;"></div>
<div class="r" style="left:2138px;top:283px;width:1px;height:30px;background:#d8d8d8;"></div>
<div class="r" style="left:2234px;top:283px;width:1px;height:30px;background:#d8d8d8;"></div>
<div class="r" style="left:2330px;top:283px;width:1px;height:30px;background:#d8d8d8;"></div>
<div class="r" style="left:2426px;top:283px;width:1px;height:30px;background:#d8d8d8;"></div>
<div class="r" style="left:0px;top:312px;width:2450px;height:1px;background:#d6d6d6;"></div>
<div class="r" style="left:51px;top:313px;width:1px;height:1140px;background:#d6d6d6;"></div>
<div class="r" style="left:0px;top:348px;width:51px;height:1px;background:#dcdcdc;"></div>
<div class="r" style="left:0px;top:383px;width:51px;height:1px;background:#dcdcdc;"></div>
<div class="r" style="left:0px;top:418px;width:51px;height:1px;background:#dcdcdc;"></div>
<div class="r" style="left:0px;top:453px;width:51px;height:1px;background:#dcdcdc;"></div>
<div class="r" style="left:0px;top:488px;width:51px;height:1px;background:#dcdcdc;"></div>
<div class="r" style="left:0px;top:523px;width:51px;height:1px;background:#dcdcdc;"></div>
<div class="r" style="left:0px;top:558px;width:51px;height:1px;background:#dcdcdc;"></div>
<div class="r" style="left:0px;top:593px;width:51px;height:1px;background:#dcdcdc;"></div>
<div class="r" style="left:0px;top:628px;width:51px;height:1px;background:#dcdcdc;"></div>
<div class="r" style="left:0px;top:663px;width:51px;height:1px;background:#dcdcdc;"></div>
<div class="r" style="left:0px;top:698px;width:51px;height:1px;background:#dcdcdc;"></div>
<div class="r" style="left:0px;top:733px;width:51px;height:1px;background:#dcdcdc;"></div>
<div class="r" style="left:0px;top:768px;width:51px;height:1px;background:#dcdcdc;"></div>
<div class="r" style="left:0px;top:803px;width:51px;height:1px;background:#dcdcdc;"></div>
<div class="r" style="left:0px;top:838px;width:51px;height:1px;background:#dcdcdc;"></div>
<div class="r" style="left:0px;top:866px;width:51px;height:1px;background:#dcdcdc;"></div>
<div class="r" style="left:0px;top:894px;width:51px;height:1px;background:#dcdcdc;"></div>
<div class="r" style="left:0px;top:922px;width:51px;height:1px;background:#dcdcdc;"></div>
<div class="r" style="left:0px;top:950px;width:51px;height:1px;background:#dcdcdc;"></div>
<div class="r" style="left:0px;top:978px;width:51px;height:1px;background:#dcdcdc;"></div>
<div class="r" style="left:0px;top:1006px;width:51px;height:1px;background:#dcdcdc;"></div>
<div class="r" style="left:0px;top:1034px;width:51px;height:1px;background:#dcdcdc;"></div>
<div class="r" style="left:0px;top:1062px;width:51px;height:1px;background:#dcdcdc;"></div>
<div class="r" style="left:0px;top:1090px;width:51px;height:1px;background:#dcdcdc;"></div>
<div class="r" style="left:0px;top:1118px;width:51px;height:1px;background:#dcdcdc;"></div>
<div class="r" style="left:0px;top:1146px;width:51px;height:1px;background:#dcdcdc;"></div>
<div class="r" style="left:0px;top:1174px;width:51px;height:1px;background:#dcdcdc;"></div>
<div class="r" style="left:0px;top:1202px;width:51px;height:1px;background:#dcdcdc;"></div>
<div class="r" style="left:0px;top:1230px;width:51px;height:1px;background:#dcdcdc;"></div>
<div class="r" style="left:0px;top:1258px;width:51px;height:1px;background:#dcdcdc;"></div>
<div class="r" style="left:0px;top:1286px;width:51px;height:1px;background:#dcdcdc;"></div>
<div class="r" style="left:0px;top:1314px;width:51px;height:1px;background:#dcdcdc;"></div>
<div class="r" style="left:0px;top:1342px;width:51px;height:1px;background:#dcdcdc;"></div>
<div class="r" style="left:0px;top:1370px;width:51px;height:1px;background:#dcdcdc;"></div>
<div class="r" style="left:0px;top:1398px;width:51px;height:1px;background:#dcdcdc;"></div>
<div class="r" style="left:0px;top:1426px;width:51px;height:1px;background:#dcdcdc;"></div>
<div class="r" style="left:0px;top:1454px;width:51px;height:1px;background:#dcdcdc;"></div>
<div class="t" style="left:69.5px;width:60px;text-align:center;top:289px;font-size:19px;line-height:19px;color:#555">A</div>
<div class="t" style="left:220.5px;width:60px;text-align:center;top:289px;font-size:19px;line-height:19px;color:#555">B</div>
<div class="t" style="left:497.5px;width:60px;text-align:center;top:289px;font-size:19px;line-height:19px;color:#555">C</div>
<div class="t" style="left:719.5px;width:60px;text-align:center;top:289px;font-size:19px;line-height:19px;color:#555">D</div>
<div class="t" style="left:815.5px;width:60px;text-align:center;top:289px;font-size:19px;line-height:19px;color:#555">E</div>
<div class="t" style="left:958.0px;width:60px;text-align:center;top:289px;font-size:19px;line-height:19px;color:#555">F</div>
<div class="t" style="left:1100.5px;width:60px;text-align:center;top:289px;font-size:19px;line-height:19px;color:#555">G</div>
<div class="t" style="left:1196.5px;width:60px;text-align:center;top:289px;font-size:19px;line-height:19px;color:#555">H</div>
<div class="t" style="left:1292.5px;width:60px;text-align:center;top:289px;font-size:19px;line-height:19px;color:#555">I</div>
<div class="t" style="left:1388.5px;width:60px;text-align:center;top:289px;font-size:19px;line-height:19px;color:#555">J</div>
<div class="t" style="left:1484.5px;width:60px;text-align:center;top:289px;font-size:19px;line-height:19px;color:#555">K</div>
<div class="t" style="left:1580.5px;width:60px;text-align:center;top:289px;font-size:19px;line-height:19px;color:#555">L</div>
<div class="t" style="left:1676.5px;width:60px;text-align:center;top:289px;font-size:19px;line-height:19px;color:#555">M</div>
<div class="t" style="left:1772.5px;width:60px;text-align:center;top:289px;font-size:19px;line-height:19px;color:#555">N</div>
<div class="t" style="left:1868.5px;width:60px;text-align:center;top:289px;font-size:19px;line-height:19px;color:#555">O</div>
<div class="t" style="left:1964.5px;width:60px;text-align:center;top:289px;font-size:19px;line-height:19px;color:#555">P</div>
<div class="t" style="left:2060.5px;width:60px;text-align:center;top:289px;font-size:19px;line-height:19px;color:#555">Q</div>
<div class="t" style="left:2156.5px;width:60px;text-align:center;top:289px;font-size:19px;line-height:19px;color:#555">R</div>
<div class="t" style="left:2252.5px;width:60px;text-align:center;top:289px;font-size:19px;line-height:19px;color:#555">S</div>
<div class="t" style="left:2348.5px;width:60px;text-align:center;top:289px;font-size:19px;line-height:19px;color:#157a4c">T</div>
<div class="r" style="left:2331px;top:311px;width:96px;height:2.5px;background:#1e8a57;"></div>
<svg class="s" style="left:22px;top:295px;" width="10" height="10" viewBox="0 0 10 10" fill="none"><path d="M9.5 0.5 V9.5 H0.5 Z" fill="#666"/></svg>
<div class="t" style="left:1px;width:51px;text-align:center;top:321.0px;font-size:19px;line-height:19px;color:#555">1</div>
<div class="t" style="left:1px;width:51px;text-align:center;top:356.0px;font-size:19px;line-height:19px;color:#555">2</div>
<div class="t" style="left:1px;width:51px;text-align:center;top:391.0px;font-size:19px;line-height:19px;color:#555">3</div>
<div class="t" style="left:1px;width:51px;text-align:center;top:426.0px;font-size:19px;line-height:19px;color:#555">4</div>
<div class="t" style="left:1px;width:51px;text-align:center;top:461.0px;font-size:19px;line-height:19px;color:#555">5</div>
<div class="t" style="left:1px;width:51px;text-align:center;top:496.0px;font-size:19px;line-height:19px;color:#555">6</div>
<div class="t" style="left:1px;width:51px;text-align:center;top:531.0px;font-size:19px;line-height:19px;color:#555">7</div>
<div class="t" style="left:1px;width:51px;text-align:center;top:566.0px;font-size:19px;line-height:19px;color:#555">8</div>
<div class="t" style="left:1px;width:51px;text-align:center;top:601.0px;font-size:19px;line-height:19px;color:#555">9</div>
<div class="t" style="left:1px;width:51px;text-align:center;top:636.0px;font-size:19px;line-height:19px;color:#555">10</div>
<div class="t" style="left:1px;width:51px;text-align:center;top:671.0px;font-size:19px;line-height:19px;color:#555">11</div>
<div class="t" style="left:1px;width:51px;text-align:center;top:706.0px;font-size:19px;line-height:19px;color:#157a4c">12</div>
<div class="t" style="left:1px;width:51px;text-align:center;top:741.0px;font-size:19px;line-height:19px;color:#555">13</div>
<div class="t" style="left:1px;width:51px;text-align:center;top:776.0px;font-size:19px;line-height:19px;color:#555">14</div>
<div class="t" style="left:1px;width:51px;text-align:center;top:811.0px;font-size:19px;line-height:19px;color:#555">15</div>
<div class="t" style="left:1px;width:51px;text-align:center;top:842.5px;font-size:19px;line-height:19px;color:#555">16</div>
<div class="t" style="left:1px;width:51px;text-align:center;top:870.5px;font-size:19px;line-height:19px;color:#555">17</div>
<div class="t" style="left:1px;width:51px;text-align:center;top:898.5px;font-size:19px;line-height:19px;color:#555">18</div>
<div class="t" style="left:1px;width:51px;text-align:center;top:926.5px;font-size:19px;line-height:19px;color:#555">19</div>
<div class="t" style="left:1px;width:51px;text-align:center;top:954.5px;font-size:19px;line-height:19px;color:#555">20</div>
<div class="t" style="left:1px;width:51px;text-align:center;top:982.5px;font-size:19px;line-height:19px;color:#555">21</div>
<div class="t" style="left:1px;width:51px;text-align:center;top:1010.5px;font-size:19px;line-height:19px;color:#555">22</div>
<div class="t" style="left:1px;width:51px;text-align:center;top:1038.5px;font-size:19px;line-height:19px;color:#555">23</div>
<div class="t" style="left:1px;width:51px;text-align:center;top:1066.5px;font-size:19px;line-height:19px;color:#555">24</div>
<div class="t" style="left:1px;width:51px;text-align:center;top:1094.5px;font-size:19px;line-height:19px;color:#555">25</div>
<div class="t" style="left:1px;width:51px;text-align:center;top:1122.5px;font-size:19px;line-height:19px;color:#555">26</div>
<div class="t" style="left:1px;width:51px;text-align:center;top:1150.5px;font-size:19px;line-height:19px;color:#555">27</div>
<div class="t" style="left:1px;width:51px;text-align:center;top:1178.5px;font-size:19px;line-height:19px;color:#555">28</div>
<div class="t" style="left:1px;width:51px;text-align:center;top:1206.5px;font-size:19px;line-height:19px;color:#555">29</div>
<div class="t" style="left:1px;width:51px;text-align:center;top:1234.5px;font-size:19px;line-height:19px;color:#555">30</div>
<div class="t" style="left:1px;width:51px;text-align:center;top:1262.5px;font-size:19px;line-height:19px;color:#555">31</div>
<div class="t" style="left:1px;width:51px;text-align:center;top:1290.5px;font-size:19px;line-height:19px;color:#555">32</div>
<div class="t" style="left:1px;width:51px;text-align:center;top:1318.5px;font-size:19px;line-height:19px;color:#555">33</div>
<div class="t" style="left:1px;width:51px;text-align:center;top:1346.5px;font-size:19px;line-height:19px;color:#555">34</div>
<div class="t" style="left:1px;width:51px;text-align:center;top:1374.5px;font-size:19px;line-height:19px;color:#555">35</div>
<div class="t" style="left:1px;width:51px;text-align:center;top:1402.5px;font-size:19px;line-height:19px;color:#555">36</div>
<div class="t" style="left:1px;width:51px;text-align:center;top:1430.5px;font-size:19px;line-height:19px;color:#555">37</div>
<div class="r" style="left:52px;top:348px;width:1031px;height:1.2px;background:#000;"></div>
<div class="r" style="left:52px;top:383px;width:1031px;height:1.2px;background:#000;"></div>
<div class="r" style="left:52px;top:418px;width:1031px;height:1.2px;background:#000;"></div>
<div class="r" style="left:52px;top:453px;width:1031px;height:1.2px;background:#000;"></div>
<div class="r" style="left:52px;top:488px;width:1031px;height:1.2px;background:#000;"></div>
<div class="r" style="left:52px;top:523px;width:1031px;height:1.2px;background:#000;"></div>
<div class="r" style="left:52px;top:558px;width:1031px;height:1.2px;background:#000;"></div>
<div class="r" style="left:52px;top:593px;width:1031px;height:1.2px;background:#000;"></div>
<div class="r" style="left:52px;top:628px;width:1031px;height:1.2px;background:#000;"></div>
<div class="r" style="left:52px;top:663px;width:1031px;height:1.2px;background:#000;"></div>
<div class="r" style="left:52px;top:698px;width:1031px;height:1.2px;background:#000;"></div>
<div class="r" style="left:52px;top:733px;width:1031px;height:1.2px;background:#000;"></div>
<div class="r" style="left:52px;top:768px;width:1031px;height:1.2px;background:#000;"></div>
<div class="r" style="left:52px;top:803px;width:1031px;height:1.2px;background:#000;"></div>
<div class="r" style="left:52px;top:838px;width:1031px;height:1.2px;background:#000;"></div>
<div class="r" style="left:147px;top:313px;width:1.2px;height:526px;background:#000;"></div>
<div class="r" style="left:353px;top:313px;width:1.2px;height:526px;background:#000;"></div>
<div class="r" style="left:701px;top:313px;width:1.2px;height:526px;background:#000;"></div>
<div class="r" style="left:797px;top:313px;width:1.2px;height:526px;background:#000;"></div>
<div class="r" style="left:893px;top:313px;width:1.2px;height:526px;background:#000;"></div>
<div class="r" style="left:1082px;top:313px;width:1.2px;height:526px;background:#000;"></div>
<div class="t" style="left:-0.5px;width:200px;text-align:center;top:320px;font-size:28px;line-height:28px;font-weight:bold;font-family:'Liberation Serif', serif;color:#000">技工</div>
<div class="t" style="left:150.5px;width:200px;text-align:center;top:320px;font-size:28px;line-height:28px;font-weight:bold;font-family:'Liberation Serif', serif;color:#000">价格（亿）</div>
<div class="t" style="left:427.5px;width:200px;text-align:center;top:320px;font-size:28px;line-height:28px;font-weight:bold;font-family:'Liberation Serif', serif;color:#000">绝对性价比</div>
<div class="t" style="left:649.5px;width:200px;text-align:center;top:320px;font-size:28px;line-height:28px;font-weight:bold;font-family:'Liberation Serif', serif;color:#000">Δ<span style="margin-left:6px"></span>技工</div>
<div class="t" style="left:745.5px;width:200px;text-align:center;top:320px;font-size:28px;line-height:28px;font-weight:bold;font-family:'Liberation Serif', serif;color:#000">Δ<span style="margin-left:6px"></span>价格</div>
<div class="t" style="left:888.0px;width:200px;text-align:center;top:320px;font-size:28px;line-height:28px;font-weight:bold;font-family:'Liberation Serif', serif;color:#000">边际性价比</div>
<div class="t" style="left:-50.5px;width:300px;text-align:center;top:355px;font-size:28px;line-height:28px;font-family:'Liberation Serif', serif;color:#000;transform:scaleY(1.0);transform-origin:50% 22px">8</div>
<div class="t" style="left:100.5px;width:300px;text-align:center;top:355px;font-size:28px;line-height:28px;font-family:'Liberation Serif', serif;color:#000;transform:scaleY(1.0);transform-origin:50% 22px">2<span class="dt">.</span>33</div>
<div class="t" style="left:377.5px;width:300px;text-align:center;top:355px;font-size:28px;line-height:28px;font-family:'Liberation Serif', serif;color:#000;transform:scaleY(1.0);transform-origin:50% 22px">3<span class="dt">.</span>433476395</div>
<div class="t" style="left:-50.5px;width:300px;text-align:center;top:390px;font-size:28px;line-height:28px;font-family:'Liberation Serif', serif;color:#000;transform:scaleY(1.0);transform-origin:50% 22px">8<span class="dt">.</span>2</div>
<div class="t" style="left:100.5px;width:300px;text-align:center;top:390px;font-size:28px;line-height:28px;font-family:'Liberation Serif', serif;color:#000;transform:scaleY(1.0);transform-origin:50% 22px">2<span class="dt">.</span>42</div>
<div class="t" style="left:377.5px;width:300px;text-align:center;top:390px;font-size:28px;line-height:28px;font-family:'Liberation Serif', serif;color:#000;transform:scaleY(1.0);transform-origin:50% 22px">3<span class="dt">.</span>388429752</div>
<div class="t" style="left:599.5px;width:300px;text-align:center;top:390px;font-size:28px;line-height:28px;font-family:'Liberation Serif', serif;color:#000;transform:scaleY(1.0);transform-origin:50% 22px">0<span class="dt">.</span>2</div>
<div class="t" style="left:695.5px;width:300px;text-align:center;top:390px;font-size:28px;line-height:28px;font-family:'Liberation Serif', serif;color:#000;transform:scaleY(1.0);transform-origin:50% 22px">0<span class="dt">.</span>09</div>
<div class="t" style="left:838.0px;width:300px;text-align:center;top:390px;font-size:28px;line-height:28px;font-family:'Liberation Serif', serif;color:#000;transform:scaleY(1.0);transform-origin:50% 22px">2<span class="dt">.</span>222222222</div>
<div class="t" style="left:-50.5px;width:300px;text-align:center;top:425px;font-size:28px;line-height:28px;font-family:'Liberation Serif', serif;color:#000;transform:scaleY(1.0);transform-origin:50% 22px">8<span class="dt">.</span>4</div>
<div class="t" style="left:100.5px;width:300px;text-align:center;top:425px;font-size:28px;line-height:28px;font-family:'Liberation Serif', serif;color:#000;transform:scaleY(1.0);transform-origin:50% 22px">2<span class="dt">.</span>82</div>
<div class="t" style="left:377.5px;width:300px;text-align:center;top:425px;font-size:28px;line-height:28px;font-family:'Liberation Serif', serif;color:#000;transform:scaleY(1.0);transform-origin:50% 22px">2<span class="dt">.</span>978723404</div>
<div class="t" style="left:599.5px;width:300px;text-align:center;top:425px;font-size:28px;line-height:28px;font-family:'Liberation Serif', serif;color:#000;transform:scaleY(1.0);transform-origin:50% 22px">0<span class="dt">.</span>2</div>
<div class="t" style="left:695.5px;width:300px;text-align:center;top:425px;font-size:28px;line-height:28px;font-family:'Liberation Serif', serif;color:#000;transform:scaleY(1.0);transform-origin:50% 22px">0<span class="dt">.</span>4</div>
<div class="t" style="left:838.0px;width:300px;text-align:center;top:425px;font-size:28px;line-height:28px;font-family:'Liberation Serif', serif;color:#000;transform:scaleY(1.0);transform-origin:50% 22px">0<span class="dt">.</span>5</div>
<div class="t" style="left:-50.5px;width:300px;text-align:center;top:460px;font-size:28px;line-height:28px;font-family:'Liberation Serif', serif;color:#000;transform:scaleY(1.0);transform-origin:50% 22px">8<span class="dt">.</span>8</div>
<div class="t" style="left:100.5px;width:300px;text-align:center;top:460px;font-size:28px;line-height:28px;font-family:'Liberation Serif', serif;color:#000;transform:scaleY(1.0);transform-origin:50% 22px">2<span class="dt">.</span>98</div>
<div class="t" style="left:377.5px;width:300px;text-align:center;top:460px;font-size:28px;line-height:28px;font-family:'Liberation Serif', serif;color:#000;transform:scaleY(1.0);transform-origin:50% 22px">2<span class="dt">.</span>953020134</div>
<div class="t" style="left:599.5px;width:300px;text-align:center;top:460px;font-size:28px;line-height:28px;font-family:'Liberation Serif', serif;color:#000;transform:scaleY(1.0);transform-origin:50% 22px">0<span class="dt">.</span>4</div>
<div class="t" style="left:695.5px;width:300px;text-align:center;top:460px;font-size:28px;line-height:28px;font-family:'Liberation Serif', serif;color:#000;transform:scaleY(1.0);transform-origin:50% 22px">0<span class="dt">.</span>16</div>
<div class="t" style="left:838.0px;width:300px;text-align:center;top:460px;font-size:28px;line-height:28px;font-family:'Liberation Serif', serif;color:#000;transform:scaleY(1.0);transform-origin:50% 22px">2<span class="dt">.</span>5</div>
<div class="t" style="left:-50.5px;width:300px;text-align:center;top:495px;font-size:28px;line-height:28px;font-family:'Liberation Serif', serif;color:#000;transform:scaleY(1.0);transform-origin:50% 22px">9<span class="dt">.</span>2</div>
<div class="t" style="left:100.5px;width:300px;text-align:center;top:495px;font-size:28px;line-height:28px;font-family:'Liberation Serif', serif;color:#000;transform:scaleY(1.0);transform-origin:50% 22px">3<span class="dt">.</span>18</div>
<div class="t" style="left:377.5px;width:300px;text-align:center;top:495px;font-size:28px;line-height:28px;font-family:'Liberation Serif', serif;color:#000;transform:scaleY(1.0);transform-origin:50% 22px">2<span class="dt">.</span>893081761</div>
<div class="t" style="left:599.5px;width:300px;text-align:center;top:495px;font-size:28px;line-height:28px;font-family:'Liberation Serif', serif;color:#000;transform:scaleY(1.0);transform-origin:50% 22px">0<span class="dt">.</span>4</div>
<div class="t" style="left:695.5px;width:300px;text-align:center;top:495px;font-size:28px;line-height:28px;font-family:'Liberation Serif', serif;color:#000;transform:scaleY(1.0);transform-origin:50% 22px">0<span class="dt">.</span>2</div>
<div class="t" style="left:838.0px;width:300px;text-align:center;top:495px;font-size:28px;line-height:28px;font-family:'Liberation Serif', serif;color:#000;transform:scaleY(1.0);transform-origin:50% 22px">2</div>
<div class="t" style="left:-50.5px;width:300px;text-align:center;top:530px;font-size:28px;line-height:28px;font-family:'Liberation Serif', serif;color:#000;transform:scaleY(1.0);transform-origin:50% 22px">9<span class="dt">.</span>6</div>
<div class="t" style="left:100.5px;width:300px;text-align:center;top:530px;font-size:28px;line-height:28px;font-family:'Liberation Serif', serif;color:#000;transform:scaleY(1.0);transform-origin:50% 22px">3<span class="dt">.</span>56</div>
<div class="t" style="left:377.5px;width:300px;text-align:center;top:530px;font-size:28px;line-height:28px;font-family:'Liberation Serif', serif;color:#000;transform:scaleY(1.0);transform-origin:50% 22px">2<span class="dt">.</span>696629213</div>
<div class="t" style="left:599.5px;width:300px;text-align:center;top:530px;font-size:28px;line-height:28px;font-family:'Liberation Serif', serif;color:#000;transform:scaleY(1.0);transform-origin:50% 22px">0<span class="dt">.</span>4</div>
<div class="t" style="left:695.5px;width:300px;text-align:center;top:530px;font-size:28px;line-height:28px;font-family:'Liberation Serif', serif;color:#000;transform:scaleY(1.0);transform-origin:50% 22px">0<span class="dt">.</span>38</div>
<div class="t" style="left:838.0px;width:300px;text-align:center;top:530px;font-size:28px;line-height:28px;font-family:'Liberation Serif', serif;color:#000;transform:scaleY(1.0);transform-origin:50% 22px">1<span class="dt">.</span>052631579</div>
<div class="t" style="left:-50.5px;width:300px;text-align:center;top:565px;font-size:28px;line-height:28px;font-family:'Liberation Serif', serif;color:#000;transform:scaleY(1.0);transform-origin:50% 22px">9<span class="dt">.</span>8</div>
<div class="t" style="left:100.5px;width:300px;text-align:center;top:565px;font-size:28px;line-height:28px;font-family:'Liberation Serif', serif;color:#000;transform:scaleY(1.0);transform-origin:50% 22px">4<span class="dt">.</span>18</div>
<div class="t" style="left:377.5px;width:300px;text-align:center;top:565px;font-size:28px;line-height:28px;font-family:'Liberation Serif', serif;color:#000;transform:scaleY(1.0);transform-origin:50% 22px">2<span class="dt">.</span>344497608</div>
<div class="t" style="left:599.5px;width:300px;text-align:center;top:565px;font-size:28px;line-height:28px;font-family:'Liberation Serif', serif;color:#000;transform:scaleY(1.0);transform-origin:50% 22px">0<span class="dt">.</span>2</div>
<div class="t" style="left:695.5px;width:300px;text-align:center;top:565px;font-size:28px;line-height:28px;font-family:'Liberation Serif', serif;color:#000;transform:scaleY(1.0);transform-origin:50% 22px">0<span class="dt">.</span>62</div>
<div class="t" style="left:838.0px;width:300px;text-align:center;top:565px;font-size:28px;line-height:28px;font-family:'Liberation Serif', serif;color:#000;transform:scaleY(1.0);transform-origin:50% 22px">0<span class="dt">.</span>322580645</div>
<div class="t" style="left:-50.5px;width:300px;text-align:center;top:600px;font-size:28px;line-height:28px;font-family:'Liberation Serif', serif;color:#000;transform:scaleY(1.0);transform-origin:50% 22px">10<span class="dt">.</span>4</div>
<div class="t" style="left:100.5px;width:300px;text-align:center;top:600px;font-size:28px;line-height:28px;font-family:'Liberation Serif', serif;color:#000;transform:scaleY(1.0);transform-origin:50% 22px">4<span class="dt">.</span>96</div>
<div class="t" style="left:377.5px;width:300px;text-align:center;top:600px;font-size:28px;line-height:28px;font-family:'Liberation Serif', serif;color:#000;transform:scaleY(1.0);transform-origin:50% 22px">2<span class="dt">.</span>096774194</div>
<div class="t" style="left:599.5px;width:300px;text-align:center;top:600px;font-size:28px;line-height:28px;font-family:'Liberation Serif', serif;color:#000;transform:scaleY(1.0);transform-origin:50% 22px">0<span class="dt">.</span>6</div>
<div class="t" style="left:695.5px;width:300px;text-align:center;top:600px;font-size:28px;line-height:28px;font-family:'Liberation Serif', serif;color:#000;transform:scaleY(1.0);transform-origin:50% 22px">0<span class="dt">.</span>78</div>
<div class="t" style="left:838.0px;width:300px;text-align:center;top:600px;font-size:28px;line-height:28px;font-family:'Liberation Serif', serif;color:#000;transform:scaleY(1.0);transform-origin:50% 22px">0<span class="dt">.</span>769230769</div>
<div class="t" style="left:-50.5px;width:300px;text-align:center;top:635px;font-size:28px;line-height:28px;font-family:'Liberation Serif', serif;color:#000;transform:scaleY(1.0);transform-origin:50% 22px">10<span class="dt">.</span>8</div>
<div class="t" style="left:100.5px;width:300px;text-align:center;top:635px;font-size:28px;line-height:28px;font-family:'Liberation Serif', serif;color:#000;transform:scaleY(1.0);transform-origin:50% 22px">5<span class="dt">.</span>58</div>
<div class="t" style="left:377.5px;width:300px;text-align:center;top:635px;font-size:28px;line-height:28px;font-family:'Liberation Serif', serif;color:#000;transform:scaleY(1.0);transform-origin:50% 22px">1<span class="dt">.</span>935483871</div>
<div class="t" style="left:599.5px;width:300px;text-align:center;top:635px;font-size:28px;line-height:28px;font-family:'Liberation Serif', serif;color:#000;transform:scaleY(1.0);transform-origin:50% 22px">0<span class="dt">.</span>4</div>
<div class="t" style="left:695.5px;width:300px;text-align:center;top:635px;font-size:28px;line-height:28px;font-family:'Liberation Serif', serif;color:#000;transform:scaleY(1.0);transform-origin:50% 22px">0<span class="dt">.</span>62</div>
<div class="t" style="left:838.0px;width:300px;text-align:center;top:635px;font-size:28px;line-height:28px;font-family:'Liberation Serif', serif;color:#000;transform:scaleY(1.0);transform-origin:50% 22px">0<span class="dt">.</span>64516129</div>
<div class="t" style="left:-50.5px;width:300px;text-align:center;top:670px;font-size:28px;line-height:28px;font-family:'Liberation Serif', serif;color:#000;transform:scaleY(1.0);transform-origin:50% 22px">11</div>
<div class="t" style="left:100.5px;width:300px;text-align:center;top:670px;font-size:28px;line-height:28px;font-family:'Liberation Serif', serif;color:#000;transform:scaleY(1.0);transform-origin:50% 22px">5<span class="dt">.</span>77</div>
<div class="t" style="left:377.5px;width:300px;text-align:center;top:670px;font-size:28px;line-height:28px;font-family:'Liberation Serif', serif;color:#000;transform:scaleY(1.0);transform-origin:50% 22px">1<span class="dt">.</span>906412478</div>
<div class="t" style="left:599.5px;width:300px;text-align:center;top:670px;font-size:28px;line-height:28px;font-family:'Liberation Serif', serif;color:#000;transform:scaleY(1.0);transform-origin:50% 22px">0<span class="dt">.</span>2</div>
<div class="t" style="left:695.5px;width:300px;text-align:center;top:670px;font-size:28px;line-height:28px;font-family:'Liberation Serif', serif;color:#000;transform:scaleY(1.0);transform-origin:50% 22px">0<span class="dt">.</span>19</div>
<div class="t" style="left:838.0px;width:300px;text-align:center;top:670px;font-size:28px;line-height:28px;font-family:'Liberation Serif', serif;color:#000;transform:scaleY(1.0);transform-origin:50% 22px">1<span class="dt">.</span>052631579</div>
<div class="t" style="left:-50.5px;width:300px;text-align:center;top:705px;font-size:28px;line-height:28px;font-family:'Liberation Serif', serif;color:#000;transform:scaleY(1.0);transform-origin:50% 22px">11<span class="dt">.</span>2</div>
<div class="t" style="left:100.5px;width:300px;text-align:center;top:705px;font-size:28px;line-height:28px;font-family:'Liberation Serif', serif;color:#000;transform:scaleY(1.0);transform-origin:50% 22px">6<span class="dt">.</span>2</div>
<div class="t" style="left:377.5px;width:300px;text-align:center;top:705px;font-size:28px;line-height:28px;font-family:'Liberation Serif', serif;color:#000;transform:scaleY(1.0);transform-origin:50% 22px">1<span class="dt">.</span>806451613</div>
<div class="t" style="left:599.5px;width:300px;text-align:center;top:705px;font-size:28px;line-height:28px;font-family:'Liberation Serif', serif;color:#000;transform:scaleY(1.0);transform-origin:50% 22px">0<span class="dt">.</span>2</div>
<div class="t" style="left:695.5px;width:300px;text-align:center;top:705px;font-size:28px;line-height:28px;font-family:'Liberation Serif', serif;color:#000;transform:scaleY(1.0);transform-origin:50% 22px">0<span class="dt">.</span>43</div>
<div class="t" style="left:838.0px;width:300px;text-align:center;top:705px;font-size:28px;line-height:28px;font-family:'Liberation Serif', serif;color:#000;transform:scaleY(1.0);transform-origin:50% 22px">0<span class="dt">.</span>465116279</div>
<div class="t" style="left:-50.5px;width:300px;text-align:center;top:740px;font-size:28px;line-height:28px;font-family:'Liberation Serif', serif;color:#000;transform:scaleY(1.0);transform-origin:50% 22px">11<span class="dt">.</span>4</div>
<div class="t" style="left:100.5px;width:300px;text-align:center;top:740px;font-size:28px;line-height:28px;font-family:'Liberation Serif', serif;color:#000;transform:scaleY(1.0);transform-origin:50% 22px">6<span class="dt">.</span>66</div>
<div class="t" style="left:377.5px;width:300px;text-align:center;top:740px;font-size:28px;line-height:28px;font-family:'Liberation Serif', serif;color:#000;transform:scaleY(1.0);transform-origin:50% 22px">1<span class="dt">.</span>711711712</div>
<div class="t" style="left:599.5px;width:300px;text-align:center;top:740px;font-size:28px;line-height:28px;font-family:'Liberation Serif', serif;color:#000;transform:scaleY(1.0);transform-origin:50% 22px">0<span class="dt">.</span>2</div>
<div class="t" style="left:695.5px;width:300px;text-align:center;top:740px;font-size:28px;line-height:28px;font-family:'Liberation Serif', serif;color:#000;transform:scaleY(1.0);transform-origin:50% 22px">0<span class="dt">.</span>46</div>
<div class="t" style="left:838.0px;width:300px;text-align:center;top:740px;font-size:28px;line-height:28px;font-family:'Liberation Serif', serif;color:#000;transform:scaleY(1.0);transform-origin:50% 22px">0<span class="dt">.</span>434782609</div>
<div class="t" style="left:-50.5px;width:300px;text-align:center;top:775px;font-size:28px;line-height:28px;font-family:'Liberation Serif', serif;color:#000;transform:scaleY(1.0);transform-origin:50% 22px">11<span class="dt">.</span>6</div>
<div class="t" style="left:100.5px;width:300px;text-align:center;top:775px;font-size:28px;line-height:28px;font-family:'Liberation Serif', serif;color:#000;transform:scaleY(1.0);transform-origin:50% 22px">6<span class="dt">.</span>9</div>
<div class="t" style="left:377.5px;width:300px;text-align:center;top:775px;font-size:28px;line-height:28px;font-family:'Liberation Serif', serif;color:#000;transform:scaleY(1.0);transform-origin:50% 22px">1<span class="dt">.</span>68115942</div>
<div class="t" style="left:599.5px;width:300px;text-align:center;top:775px;font-size:28px;line-height:28px;font-family:'Liberation Serif', serif;color:#000;transform:scaleY(1.0);transform-origin:50% 22px">0<span class="dt">.</span>2</div>
<div class="t" style="left:695.5px;width:300px;text-align:center;top:775px;font-size:28px;line-height:28px;font-family:'Liberation Serif', serif;color:#000;transform:scaleY(1.0);transform-origin:50% 22px">0<span class="dt">.</span>24</div>
<div class="t" style="left:838.0px;width:300px;text-align:center;top:775px;font-size:28px;line-height:28px;font-family:'Liberation Serif', serif;color:#000;transform:scaleY(1.0);transform-origin:50% 22px">0<span class="dt">.</span>833333333</div>
<div class="t" style="left:-50.5px;width:300px;text-align:center;top:810px;font-size:28px;line-height:28px;font-family:'Liberation Serif', serif;color:#000;transform:scaleY(1.0);transform-origin:50% 22px">11<span class="dt">.</span>8</div>
<div class="t" style="left:100.5px;width:300px;text-align:center;top:810px;font-size:28px;line-height:28px;font-family:'Liberation Serif', serif;color:#000;transform:scaleY(1.0);transform-origin:50% 22px">8<span class="dt">.</span>18</div>
<div class="t" style="left:377.5px;width:300px;text-align:center;top:810px;font-size:28px;line-height:28px;font-family:'Liberation Serif', serif;color:#000;transform:scaleY(1.0);transform-origin:50% 22px">1<span class="dt">.</span>442542787</div>
<div class="t" style="left:599.5px;width:300px;text-align:center;top:810px;font-size:28px;line-height:28px;font-family:'Liberation Serif', serif;color:#000;transform:scaleY(1.0);transform-origin:50% 22px">0<span class="dt">.</span>2</div>
<div class="t" style="left:695.5px;width:300px;text-align:center;top:810px;font-size:28px;line-height:28px;font-family:'Liberation Serif', serif;color:#000;transform:scaleY(1.0);transform-origin:50% 22px">1<span class="dt">.</span>28</div>
<div class="t" style="left:838.0px;width:300px;text-align:center;top:810px;font-size:28px;line-height:28px;font-family:'Liberation Serif', serif;color:#000;transform:scaleY(1.0);transform-origin:50% 22px">0<span class="dt">.</span>15625</div>
<div class="r" style="left:2330px;top:697px;width:97px;height:36px;box-sizing:border-box;border:2.5px solid #1e8a57"></div>
<div class="r" style="left:2423px;top:729px;width:7px;height:7px;background:#1e8a57;border:1px solid #fff"></div>
<svg class="s" style="left:1205px;top:411px;" width="963" height="682" viewBox="0 0 963 682" fill="none"><rect x="0.75" y="0.75" width="961.5" height="680.5" fill="#fff" stroke="#d4d4d4" stroke-width="1.5"/><path d="M45 591.5 H941" stroke="#d9d9d9" stroke-width="2"/><text x="33" y="596.7" font-family="Liberation Sans" font-size="15.5" fill="#595959" text-anchor="end">0</text><path d="M45 526.6 H941" stroke="#d9d9d9" stroke-width="2"/><text x="33" y="531.8" font-family="Liberation Sans" font-size="15.5" fill="#595959" text-anchor="end">0.5</text><path d="M45 461.8 H941" stroke="#d9d9d9" stroke-width="2"/><text x="33" y="466.9" font-family="Liberation Sans" font-size="15.5" fill="#595959" text-anchor="end">1</text><path d="M45 396.9 H941" stroke="#d9d9d9" stroke-width="2"/><text x="33" y="402.1" font-family="Liberation Sans" font-size="15.5" fill="#595959" text-anchor="end">1.5</text><path d="M45 332.0 H941" stroke="#d9d9d9" stroke-width="2"/><text x="33" y="337.2" font-family="Liberation Sans" font-size="15.5" fill="#595959" text-anchor="end">2</text><path d="M45 267.1 H941" stroke="#d9d9d9" stroke-width="2"/><text x="33" y="272.3" font-family="Liberation Sans" font-size="15.5" fill="#595959" text-anchor="end">2.5</text><path d="M45 202.2 H941" stroke="#d9d9d9" stroke-width="2"/><text x="33" y="207.4" font-family="Liberation Sans" font-size="15.5" fill="#595959" text-anchor="end">3</text><path d="M45 137.4 H941" stroke="#d9d9d9" stroke-width="2"/><text x="33" y="142.6" font-family="Liberation Sans" font-size="15.5" fill="#595959" text-anchor="end">3.5</text><path d="M45 72.5 H941" stroke="#d9d9d9" stroke-width="2"/><text x="33" y="77.7" font-family="Liberation Sans" font-size="15.5" fill="#595959" text-anchor="end">4</text><path d="M45 591.5 V598.5" stroke="#d9d9d9" stroke-width="2"/><path d="M109 591.5 V598.5" stroke="#d9d9d9" stroke-width="2"/><path d="M173 591.5 V598.5" stroke="#d9d9d9" stroke-width="2"/><path d="M237 591.5 V598.5" stroke="#d9d9d9" stroke-width="2"/><path d="M301 591.5 V598.5" stroke="#d9d9d9" stroke-width="2"/><path d="M365 591.5 V598.5" stroke="#d9d9d9" stroke-width="2"/><path d="M429 591.5 V598.5" stroke="#d9d9d9" stroke-width="2"/><path d="M493 591.5 V598.5" stroke="#d9d9d9" stroke-width="2"/><path d="M557 591.5 V598.5" stroke="#d9d9d9" stroke-width="2"/><path d="M621 591.5 V598.5" stroke="#d9d9d9" stroke-width="2"/><path d="M685 591.5 V598.5" stroke="#d9d9d9" stroke-width="2"/><path d="M749 591.5 V598.5" stroke="#d9d9d9" stroke-width="2"/><path d="M813 591.5 V598.5" stroke="#d9d9d9" stroke-width="2"/><path d="M877 591.5 V598.5" stroke="#d9d9d9" stroke-width="2"/><path d="M941 591.5 V598.5" stroke="#d9d9d9" stroke-width="2"/><text x="77" y="620" font-family="Liberation Sans" font-size="15.5" fill="#595959" text-anchor="middle">8</text><text x="141" y="620" font-family="Liberation Sans" font-size="15.5" fill="#595959" text-anchor="middle">8.2</text><text x="205" y="620" font-family="Liberation Sans" font-size="15.5" fill="#595959" text-anchor="middle">8.4</text><text x="269" y="620" font-family="Liberation Sans" font-size="15.5" fill="#595959" text-anchor="middle">8.8</text><text x="333" y="620" font-family="Liberation Sans" font-size="15.5" fill="#595959" text-anchor="middle">9.2</text><text x="397" y="620" font-family="Liberation Sans" font-size="15.5" fill="#595959" text-anchor="middle">9.6</text><text x="461" y="620" font-family="Liberation Sans" font-size="15.5" fill="#595959" text-anchor="middle">9.8</text><text x="525" y="620" font-family="Liberation Sans" font-size="15.5" fill="#595959" text-anchor="middle">10.4</text><text x="589" y="620" font-family="Liberation Sans" font-size="15.5" fill="#595959" text-anchor="middle">10.8</text><text x="653" y="620" font-family="Liberation Sans" font-size="15.5" fill="#595959" text-anchor="middle">11</text><text x="717" y="620" font-family="Liberation Sans" font-size="15.5" fill="#595959" text-anchor="middle">11.2</text><text x="781" y="620" font-family="Liberation Sans" font-size="15.5" fill="#595959" text-anchor="middle">11.4</text><text x="845" y="620" font-family="Liberation Sans" font-size="15.5" fill="#595959" text-anchor="middle">11.6</text><text x="909" y="620" font-family="Liberation Sans" font-size="15.5" fill="#595959" text-anchor="middle">11.8</text><polyline points="77.0,146.0 141.0,151.9 205.0,205.0 269.0,208.3 333.0,216.1 397.0,241.6 461.0,287.3 525.0,319.4 589.0,340.4 653.0,344.1 717.0,357.1 781.0,369.4 845.0,373.4 909.0,404.3" stroke="#eeb50a" stroke-width="5" fill="none" stroke-linejoin="round"/><circle cx="77.0" cy="146.0" r="6" fill="#eeb50a"/><circle cx="141.0" cy="151.9" r="6" fill="#eeb50a"/><circle cx="205.0" cy="205.0" r="6" fill="#eeb50a"/><circle cx="269.0" cy="208.3" r="6" fill="#eeb50a"/><circle cx="333.0" cy="216.1" r="6" fill="#eeb50a"/><circle cx="397.0" cy="241.6" r="6" fill="#eeb50a"/><circle cx="461.0" cy="287.3" r="6" fill="#eeb50a"/><circle cx="525.0" cy="319.4" r="6" fill="#eeb50a"/><circle cx="589.0" cy="340.4" r="6" fill="#eeb50a"/><circle cx="653.0" cy="344.1" r="6" fill="#eeb50a"/><circle cx="717.0" cy="357.1" r="6" fill="#eeb50a"/><circle cx="781.0" cy="369.4" r="6" fill="#eeb50a"/><circle cx="845.0" cy="373.4" r="6" fill="#eeb50a"/><circle cx="909.0" cy="404.3" r="6" fill="#eeb50a"/><polyline points="141.0,303.2 205.0,526.6 269.0,267.1 333.0,332.0 397.0,454.9 461.0,549.6 525.0,491.7 589.0,507.8 653.0,454.9 717.0,531.2 781.0,535.1 845.0,483.4 909.0,571.2" stroke="#e0485e" stroke-width="5" fill="none" stroke-linejoin="round"/><circle cx="141.0" cy="303.2" r="6" fill="#e0485e"/><circle cx="205.0" cy="526.6" r="6" fill="#e0485e"/><circle cx="269.0" cy="267.1" r="6" fill="#e0485e"/><circle cx="333.0" cy="332.0" r="6" fill="#e0485e"/><circle cx="397.0" cy="454.9" r="6" fill="#e0485e"/><circle cx="461.0" cy="549.6" r="6" fill="#e0485e"/><circle cx="525.0" cy="491.7" r="6" fill="#e0485e"/><circle cx="589.0" cy="507.8" r="6" fill="#e0485e"/><circle cx="653.0" cy="454.9" r="6" fill="#e0485e"/><circle cx="717.0" cy="531.2" r="6" fill="#e0485e"/><circle cx="781.0" cy="535.1" r="6" fill="#e0485e"/><circle cx="845.0" cy="483.4" r="6" fill="#e0485e"/><circle cx="909.0" cy="571.2" r="6" fill="#e0485e"/><text x="482" y="43" font-family="Liberation Serif" font-size="28" fill="#404040" stroke="#404040" stroke-width="0.25" text-anchor="middle">性价比计算</text><path d="M340 653 H385" stroke="#eeb50a" stroke-width="5"/><circle cx="362.5" cy="653" r="6" fill="#eeb50a"/><text x="389" y="659.5" font-family="Liberation Sans" font-size="17.5" fill="#595959">绝对性价比</text><path d="M482 653 H526" stroke="#e0485e" stroke-width="5"/><circle cx="504.5" cy="653" r="6" fill="#e0485e"/><text x="530.5" y="659.5" font-family="Liberation Sans" font-size="17.5" fill="#595959">边际性价比</text></svg>
<div class="r" style="left:2450px;top:313px;width:25px;height:1140px;background:linear-gradient(#dfeeec 0px,#dfeeec 800px,#e3e6e6 1000px);"></div>
<div class="r" style="left:2475px;top:222px;width:84px;height:1313px;background:linear-gradient(#dff0ee 0px,#dceeeb 880px,#e3e6e6 1090px);"></div>
<div class="r" style="left:2474px;top:222px;width:1px;height:1270px;background:#cfdada;"></div>
<div class="r" style="left:2456px;top:323px;width:13px;height:2px;background:#b9c3c3;"></div>
<svg class="s" style="left:2457px;top:338px;" width="11" height="9" viewBox="0 0 11 9" fill="none"><path d="M5.5 1 L10 8 H1 Z" fill="#666"/></svg>
<div class="r" style="left:2456px;top:362px;width:13px;height:1028px;background:#cdd2d2;border-radius:7px"></div>
<svg class="s" style="left:2457px;top:1430px;" width="11" height="9" viewBox="0 0 11 9" fill="none"><path d="M1 1 H10 L5.5 8 Z" fill="#666"/></svg>
<div class="r" style="left:2507px;top:257px;width:21px;height:2.6px;background:#8c9191;border-radius:1px"></div>
<svg class="s" style="left:2505px;top:294px;" width="28" height="27" viewBox="0 0 28 27" fill="none"><path d="M1.9 1.6 L23 9.2 L18 14.3 L24.6 22.7 L20.4 24.4 L14.5 17.7 L7.8 22.7 Z" stroke="#2b3030" stroke-width="1.8" stroke-linejoin="round"/></svg>
<svg class="s" style="left:2505px;top:355px;" width="27" height="22" viewBox="0 0 27 22" fill="none"><path d="M1 6.5 H4.5 M11.5 6.5 H25 M1 17.5 H15 M22 17.5 H25" stroke="#9aa3a3" stroke-width="1.7"/><ellipse cx="8" cy="6.5" rx="3.3" ry="4.3" stroke="#9aa3a3" stroke-width="1.7"/><ellipse cx="18.5" cy="17.5" rx="3.3" ry="4.3" stroke="#9aa3a3" stroke-width="1.7"/></svg>
<svg class="s" style="left:2505px;top:412px;" width="28" height="28" viewBox="0 0 28 28" fill="none"><path d="M1.6 8 V27 M5.5 3.5 H25" stroke="#9aa3a3" stroke-width="1.7"/><rect x="0.5" y="2" width="2.5" height="2.5" fill="#9aa3a3"/><path d="M7 23.5 H20.5 Q22 23.5 22 22 V10.5 M18.5 14 L22 10.5 L25.5 14 M10.5 20 L7 23.5 L10.5 27" stroke="#9aa3a3" stroke-width="1.7" stroke-linejoin="round"/></svg>
<svg class="s" style="left:2505px;top:474px;" width="28" height="26" viewBox="0 0 28 26" fill="none"><path d="M4.5 5.1 L8.9 0.9 L25.9 18.8 L21.5 23 Z M8.6 9.4 L12.9 5.2" stroke="#2b3030" stroke-width="1.6" stroke-linejoin="round"/><path d="M20 0.7999999999999998 Q20 5 24.2 5 Q20 5 20 9.2 Q20 5 15.8 5 Q20 5 20 0.7999999999999998 Z M5 12.8 Q5 17 9.2 17 Q5 17 5 21.2 Q5 17 0.7999999999999998 17 Q5 17 5 12.8 Z" stroke="#2b3030" stroke-width="1.5" stroke-linejoin="round"/></svg>
<svg class="s" style="left:2504px;top:534px;" width="28" height="27" viewBox="0 0 28 27" fill="none"><path d="M4.5 2.5 H17 L22.5 7.5 M4 8 V23 H9" stroke="#2b3030" stroke-width="1.7" stroke-linejoin="round"/><circle cx="5.5" cy="6.5" r="3.2" stroke="#2b3030" stroke-width="1.6" fill="#dff0ee"/><path d="M11.5 25 Q9 18 15 13 Q17 19 11.5 25 Z M13 25.5 Q16 19.5 23.5 19 Q21 25 13 25.5 Z" stroke="#2b3030" stroke-width="1.5" stroke-linejoin="round"/></svg>
<svg class="s" style="left:2504px;top:594px;" width="28" height="28" viewBox="0 0 28 28" fill="none"><path d="M1.5 2 L11.5 5.5 L21.5 2 V9.5 M1.5 2 V22 L11.5 25.5 M11.5 5.5 V11" stroke="#2b3030" stroke-width="1.7" stroke-linejoin="round"/><circle cx="16.5" cy="18" r="4.7" stroke="#2b3030" stroke-width="1.7"/><path d="M20 21.5 L24 25.5" stroke="#2b3030" stroke-width="1.8"/></svg>
<svg class="s" style="left:2505px;top:654px;" width="26" height="26" viewBox="0 0 26 26" fill="none"><circle cx="13" cy="13" r="11.5" stroke="#2b3030" stroke-width="1.7"/><path d="M9.3 10 Q9.3 6.3 13 6.3 Q16.7 6.3 16.7 9.6 Q16.7 12 13.5 13.5 V16.3" stroke="#2b3030" stroke-width="1.7"/><circle cx="13.5" cy="19.6" r="1.3" fill="#2b3030"/></svg>
<svg class="s" style="left:2504px;top:721px;" width="28" height="12" viewBox="0 0 28 12" fill="none"><circle cx="5" cy="6" r="2.5" stroke="#2b3030" stroke-width="1.6"/><circle cx="14" cy="6" r="2.5" stroke="#2b3030" stroke-width="1.6"/><circle cx="23.2" cy="6" r="2.5" stroke="#2b3030" stroke-width="1.6"/></svg>
<div class="r" style="left:0px;top:1453px;width:2475px;height:39px;background:#e4e7e7;"></div>
<div class="r" style="left:152px;top:1453px;width:94px;height:36px;background:#ffffff;border-radius:0 0 10px 10px"></div>
<div class="t" style="left:170px;top:1464px;font-size:18.5px;line-height:19px;color:#157a4c;font-weight:bold;font-family:'Liberation Sans', sans-serif;">Sheet1</div>
<svg class="s" style="left:256px;top:1465px;" width="16" height="16" viewBox="0 0 16 16" fill="none"><path d="M8 1 V15 M1 8 H15" stroke="#222" stroke-width="2.6"/></svg>
<svg class="s" style="left:20px;top:1463px;" width="18" height="18" viewBox="0 0 18 18" fill="none"><path d="M3.5 1.5 V16" stroke="#a3a6a6" stroke-width="3" stroke-linecap="round"/><path d="M14.5 3 L9 9 L14.5 15" stroke="#a3a6a6" stroke-width="3" stroke-linecap="round" stroke-linejoin="round"/></svg>
<svg class="s" style="left:55px;top:1463px;" width="12" height="18" viewBox="0 0 12 18" fill="none"><path d="M9 3 L3.5 9 L9 15" stroke="#a3a6a6" stroke-width="3" stroke-linecap="round" stroke-linejoin="round"/></svg>
<svg class="s" style="left:88px;top:1463px;" width="12" height="18" viewBox="0 0 12 18" fill="none"><path d="M3 3 L8.5 9 L3 15" stroke="#a3a6a6" stroke-width="3" stroke-linecap="round" stroke-linejoin="round"/></svg>
<svg class="s" style="left:118px;top:1463px;" width="18" height="18" viewBox="0 0 18 18" fill="none"><path d="M14.5 1.5 V16" stroke="#a3a6a6" stroke-width="3" stroke-linecap="round"/><path d="M3.5 3 L9 9 L3.5 15" stroke="#a3a6a6" stroke-width="3" stroke-linecap="round" stroke-linejoin="round"/></svg>
<div class="r" style="left:1459px;top:1465px;width:2px;height:13px;background:#aaa;"></div>
<svg class="s" style="left:1480px;top:1466px;" width="10" height="11" viewBox="0 0 10 11" fill="none"><path d="M8.5 2 V9 L2 5.5 Z" fill="#777"/></svg>
<div class="r" style="left:1503px;top:1465px;width:841px;height:13px;background:#cdd1d1;border-radius:7px"></div>
<svg class="s" style="left:2416px;top:1466px;" width="10" height="11" viewBox="0 0 10 11" fill="none"><path d="M1.5 2 V9 L8 5.5 Z" fill="#777"/></svg>
<div class="r" style="left:2443px;top:1465px;width:2px;height:13px;background:#aaa;"></div>
<div class="r" style="left:0px;top:1492px;width:2559px;height:37px;background:#e4e7e7;"></div>
<div class="r" style="left:0px;top:1491.5px;width:2559px;height:1px;background:#d3d8d8;"></div>
<div class="r" style="left:0px;top:1528px;width:2559px;height:7px;background:#dedcdc;"></div>
<div class="r" style="left:0px;top:1528px;width:2559px;height:2px;background:#b3b6b6;"></div>
<div class="r" style="left:2474.5px;top:1453px;width:1px;height:39px;background:#d0d6d6;"></div>
<svg class="s" style="left:24px;top:1500px;" width="24" height="21" viewBox="0 0 24 21" fill="none"><path d="M1.5 1.5 L3.5 8 L5.5 1.5 M8 1.5 V8 H10 Q12 8 12 6 Q12 4.5 10 4.5 H8 M8 1.5 H10 Q11.5 1.5 11.5 3 Q11.5 4.5 10 4.5" stroke="#333" stroke-width="1.4"/><path d="M13.5 2 H22.5 V6.5 H18 V16.5 Q18 19 15.5 19 H5 Q3 19 3 17 Q3 15 5 15 H9 Q11 15 11 17" stroke="#333" stroke-width="1.7"/></svg>
<div class="r" style="left:66px;top:1499px;width:1px;height:20px;background:#ccc;"></div>
<svg class="s" style="left:87px;top:1500px;" width="22" height="21" viewBox="0 0 22 21" fill="none"><path d="M10 18.5 H2 V2 H18 V7" stroke="#333" stroke-width="1.8"/><path d="M12 10 H20.5 M12 14 H20.5 M12 18 H20.5" stroke="#333" stroke-width="1.8"/></svg>
<svg class="s" style="left:1802px;top:1499px;" width="27" height="25" viewBox="0 0 27 25" fill="none"><path d="M11 18.5 H2.5 Q1.5 18.5 1.5 17.5 V2.5 Q1.5 1.5 2.5 1.5 H23 Q24 1.5 24 2.5 V7.5 M1.5 7 H24 M1.5 13 H11 M9.5 1.5 V18.5" stroke="#333" stroke-width="1.6"/><path d="M19 10 L24.5 13 V19.5 L19 22.5 L13.5 19.5 V13 Z" stroke="#333" stroke-width="1.6" stroke-linejoin="round"/><circle cx="19" cy="16.3" r="2" stroke="#333" stroke-width="1.5"/></svg>
<svg class="s" style="left:1851px;top:1501px;" width="25" height="17" viewBox="0 0 25 17" fill="none"><path d="M1.5 8.5 Q12.5 -3 23.5 8.5 Q12.5 20 1.5 8.5 Z" stroke="#333" stroke-width="1.7" stroke-linejoin="round"/><circle cx="12.5" cy="8.5" r="3" stroke="#333" stroke-width="1.7"/></svg>
<svg class="s" style="left:1904px;top:1499px;" width="22" height="21" viewBox="0 0 22 21" fill="none"><path d="M8 6 V2.5 Q8 1.5 9 1.5 H13 Q14 1.5 14 2.5 V6 M8 15 V18.5 Q8 19.5 9 19.5 H13 Q14 19.5 14 18.5 V15 M6 7.5 H2.5 Q1.5 7.5 1.5 8.5 V12.5 Q1.5 13.5 2.5 13.5 H6 M16 7.5 H19.5 Q20.5 7.5 20.5 8.5 V12.5 Q20.5 13.5 19.5 13.5 H16" stroke="#333" stroke-width="1.6"/><rect x="7" y="6.5" width="8" height="8" stroke="#333" stroke-width="1.6"/></svg>
<svg class="s" style="left:1933px;top:1507px;" width="10" height="6.8" viewBox="0 0 10 6.8" fill="none"><path d="M1 1 L5.0 5.8 L9 1" stroke="#333" stroke-width="2" stroke-linecap="round" stroke-linejoin="round"/></svg>
<div class="r" style="left:1964px;top:1500px;width:1px;height:20px;background:#ccc;"></div>
<div class="r" style="left:1977px;top:1492px;width:36px;height:36px;background:#d7dbdb;border-radius:5px"></div>
<svg class="s" style="left:1985px;top:1500px;" width="21" height="20" viewBox="0 0 21 20" fill="none"><rect x="1.5" y="1.5" width="18" height="17" rx="1" stroke="#333" stroke-width="1.6"/><path d="M1.5 7 H19.5 M7 1.5 V18.5" stroke="#333" stroke-width="1.6"/></svg>
<svg class="s" style="left:2033px;top:1500px;" width="21" height="20" viewBox="0 0 21 20" fill="none"><rect x="1.5" y="1.5" width="18" height="17" rx="1" stroke="#333" stroke-width="1.6"/><path d="M10.5 1.5 V18.5" stroke="#333" stroke-width="1.6"/></svg>
<svg class="s" style="left:2081px;top:1500px;" width="22" height="20" viewBox="0 0 22 20" fill="none"><path d="M1.5 13.5 V2.5 Q1.5 1.5 2.5 1.5 H15 V13.5 H1.5 V17.5 Q1.5 18.5 2.5 18.5 H19.5 Q20.5 18.5 20.5 17.5 V1.5 H15" stroke="#333" stroke-width="1.6"/></svg>
<div class="r" style="left:2121px;top:1500px;width:1px;height:20px;background:#ccc;"></div>
<div class="t" style="left:2145px;top:1500px;font-size:19px;line-height:19px;color:#333;font-weight:normal;font-family:'Liberation Sans', sans-serif;">100%</div>
<svg class="s" style="left:2211px;top:1507px;" width="10" height="6.8" viewBox="0 0 10 6.8" fill="none"><path d="M1 1 L5.0 5.8 L9 1" stroke="#333" stroke-width="1.8" stroke-linecap="round" stroke-linejoin="round"/></svg>
<div class="r" style="left:2248px;top:1509px;width:18px;height:2.5px;background:#222;"></div>
<div class="r" style="left:2287px;top:1509.5px;width:79px;height:1.5px;background:#2f55c0;"></div>
<div class="r" style="left:2366px;top:1509.5px;width:80px;height:1px;background:#b0b0b0;"></div>
<div class="r" style="left:2358px;top:1502px;width:16px;height:16px;border-radius:50%;background:#888;box-sizing:border-box;border:3px solid #fff;box-shadow:0 0 0 1px #ccc"></div>
<svg class="s" style="left:2467px;top:1501px;" width="18" height="18" viewBox="0 0 18 18" fill="none"><path d="M9 1 V17 M1 9 H17" stroke="#222" stroke-width="2.5"/></svg>
<svg class="s" style="left:2513px;top:1499px;" width="23" height="23" viewBox="0 0 23 23" fill="none"><path d="M1.5 7 V3.5 Q1.5 1.5 3.5 1.5 H7 M21.5 16 V19.5 Q21.5 21.5 19.5 21.5 H16 M14 1.5 H21.5 V9 M21.5 1.5 L13.5 9.5 M9 21.5 H1.5 V14 M1.5 21.5 L9.5 13.5" stroke="#333" stroke-width="1.7"/></svg></body></html>
